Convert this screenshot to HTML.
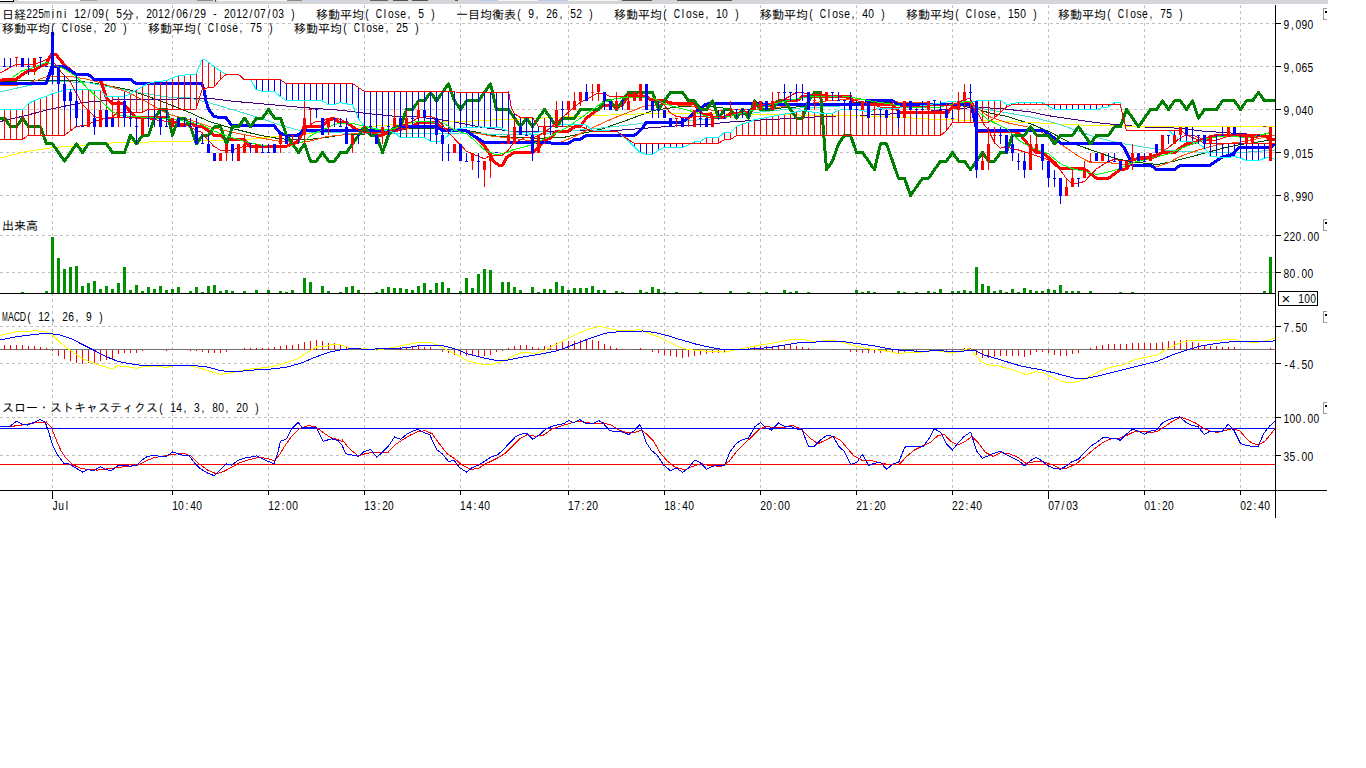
<!DOCTYPE html>
<html lang="ja"><head><meta charset="utf-8"><title>日経225mini チャート</title>
<style>
html,body{margin:0;padding:0;background:#fff;overflow:hidden}
body{width:1366px;height:768px;font-family:"Liberation Sans", "IPAGothic", sans-serif;}
svg{display:block;position:absolute;left:0;top:0}
svg text{font-family:"Liberation Sans","IPAGothic",sans-serif}
</style></head><body>
<svg width="1366" height="768" viewBox="0 0 1366 768" shape-rendering="crispEdges">
<rect x="0" y="0" width="1327.5" height="4.4" fill="#d6d6da"/>
<rect x="0" y="0" width="13" height="1.3" fill="#fff"/><rect x="0" y="1.1" width="14" height="0.9" fill="#000"/><rect x="13" y="0" width="1" height="2" fill="#000"/>
<rect x="18" y="0" width="62" height="1.2" fill="#fff"/><rect x="80" y="0" width="17" height="1.2" fill="#a8a8a8"/>
<rect x="197" y="0" width="16" height="1.2" fill="#8c8c8c"/><rect x="215" y="0" width="1" height="2" fill="#555"/>
<rect x="217" y="0" width="70" height="1.0" fill="#f4f4f4"/><rect x="287" y="0" width="15" height="1.2" fill="#8c8c8c"/>
<rect x="308" y="0" width="20" height="1.4" fill="#c5d5ee"/>
<rect x="370" y="0" width="18" height="1.2" fill="#666"/><rect x="393" y="0" width="15" height="1.2" fill="#555"/><rect x="412" y="0" width="16" height="1.2" fill="#555"/><rect x="455" y="0" width="3" height="1.2" fill="#555"/>
<rect x="478" y="0" width="140" height="1.2" fill="#f4f4f4"/><rect x="478" y="0" width="20" height="1.4" fill="#b8cdee"/><rect x="538" y="0" width="30" height="1.4" fill="#b8cdee"/>
<rect x="622" y="0" width="30" height="1.3" fill="#555"/><rect x="677" y="0" width="55" height="1.3" fill="#555"/>
<line x1="52.5" y1="5" x2="52.5" y2="490.5" stroke="#c0c0c0" stroke-dasharray="3 3"/>
<line x1="172.5" y1="5" x2="172.5" y2="490.5" stroke="#c0c0c0" stroke-dasharray="3 3"/>
<line x1="268.5" y1="5" x2="268.5" y2="490.5" stroke="#c0c0c0" stroke-dasharray="3 3"/>
<line x1="364.5" y1="5" x2="364.5" y2="490.5" stroke="#c0c0c0" stroke-dasharray="3 3"/>
<line x1="460.5" y1="5" x2="460.5" y2="490.5" stroke="#c0c0c0" stroke-dasharray="3 3"/>
<line x1="568.5" y1="5" x2="568.5" y2="490.5" stroke="#c0c0c0" stroke-dasharray="3 3"/>
<line x1="664.5" y1="5" x2="664.5" y2="490.5" stroke="#c0c0c0" stroke-dasharray="3 3"/>
<line x1="760.5" y1="5" x2="760.5" y2="490.5" stroke="#c0c0c0" stroke-dasharray="3 3"/>
<line x1="856.5" y1="5" x2="856.5" y2="490.5" stroke="#c0c0c0" stroke-dasharray="3 3"/>
<line x1="952.5" y1="5" x2="952.5" y2="490.5" stroke="#c0c0c0" stroke-dasharray="3 3"/>
<line x1="1048.5" y1="5" x2="1048.5" y2="490.5" stroke="#c0c0c0" stroke-dasharray="3 3"/>
<line x1="1144.5" y1="5" x2="1144.5" y2="490.5" stroke="#c0c0c0" stroke-dasharray="3 3"/>
<line x1="1240.5" y1="5" x2="1240.5" y2="490.5" stroke="#c0c0c0" stroke-dasharray="3 3"/>
<line x1="0" y1="23.5" x2="1275.5" y2="23.5" stroke="#c0c0c0" stroke-dasharray="3 3"/>
<line x1="0" y1="66.5" x2="1275.5" y2="66.5" stroke="#c0c0c0" stroke-dasharray="3 3"/>
<line x1="0" y1="109.5" x2="1275.5" y2="109.5" stroke="#c0c0c0" stroke-dasharray="3 3"/>
<line x1="0" y1="152.5" x2="1275.5" y2="152.5" stroke="#c0c0c0" stroke-dasharray="3 3"/>
<line x1="0" y1="195.5" x2="1275.5" y2="195.5" stroke="#c0c0c0" stroke-dasharray="3 3"/>
<line x1="0" y1="235.5" x2="1275.5" y2="235.5" stroke="#c0c0c0" stroke-dasharray="3 3"/>
<line x1="0" y1="272.5" x2="1275.5" y2="272.5" stroke="#c0c0c0" stroke-dasharray="3 3"/>
<line x1="0" y1="326.5" x2="1275.5" y2="326.5" stroke="#c0c0c0" stroke-dasharray="3 3"/>
<line x1="0" y1="363.5" x2="1275.5" y2="363.5" stroke="#c0c0c0" stroke-dasharray="3 3"/>
<line x1="0" y1="417.5" x2="1275.5" y2="417.5" stroke="#c0c0c0" stroke-dasharray="3 3"/>
<line x1="0" y1="455.5" x2="1275.5" y2="455.5" stroke="#c0c0c0" stroke-dasharray="3 3"/>
<!--SERIES-->
<polyline points="0.0,82.0 34.0,80.0 76.0,80.7 94.0,83.2 112.0,86.3 130.0,90.0 148.0,96.3 171.0,105.0 189.8,112.6 208.6,121.3 233.6,128.8 258.6,135.0 280.0,138.8 303.7,140.0 321.0,138.2 342.0,135.0 364.5,134.0 394.6,130.0 417.0,128.2 442.5,128.8 460.5,129.4 479.7,132.6 492.0,135.7 513.0,137.3 537.6,138.2 562.6,137.6 581.0,133.8 602.6,128.8 627.6,120.0 652.7,110.5 677.7,107.0 711.0,106.5 731.0,109.0 760.5,109.4 796.5,107.0 826.4,103.8 871.0,102.5 910.0,102.0 952.6,104.4 972.7,107.6 988.4,112.6 1006.5,116.3 1031.0,124.0 1048.5,131.3 1070.0,142.6 1095.0,151.3 1114.5,158.2 1132.7,162.0 1150.6,163.8 1157.7,164.5 1174.6,161.0 1204.5,153.2 1225.0,147.6 1240.5,144.5 1262.7,141.3 1275.5,138.8" fill="none" stroke="#005000" stroke-width="1" />
<polyline points="0.0,121.6 22.5,116.3 52.0,108.8 82.0,102.6 112.0,100.0 171.0,99.7 183.5,98.2 208.6,98.2 233.6,101.3 268.4,104.4 304.0,107.6 342.0,110.4 364.5,113.2 394.6,116.3 417.0,117.0 442.5,120.0 460.5,123.2 479.7,127.0 513.0,131.5 540.0,132.0 581.0,130.7 615.0,130.5 646.0,128.2 670.0,126.3 711.0,124.0 731.0,121.9 760.5,120.0 796.5,118.2 826.4,116.3 871.0,115.0 900.0,113.5 934.0,110.8 947.6,109.4 972.7,107.6 997.7,108.2 1031.0,112.0 1048.4,115.7 1096.4,122.6 1120.0,125.0 1144.6,127.0 1180.0,128.2 1204.5,131.3 1225.0,132.6 1244.0,133.8 1267.7,135.7" fill="none" stroke="#400080" stroke-width="1" />
<polyline points="0.0,158.0 24.0,152.0 52.4,147.6 112.0,143.0 172.0,141.4 208.6,140.7 246.0,139.5 271.0,137.0 296.0,134.5 321.0,132.6 342.0,131.4 364.5,127.0 394.6,124.4 417.0,122.6 442.5,122.0 467.0,121.3 492.0,120.0 513.0,119.4 550.0,117.6 587.6,116.0 625.0,114.3 671.0,113.2 711.0,113.0 760.5,114.5 812.7,115.2 871.0,116.2 890.8,117.0 911.7,118.0 935.0,119.4 985.0,120.7 1031.0,122.5 1057.6,124.0 1095.0,125.6 1140.0,126.2 1275.5,126.3" fill="none" stroke="#ffff00" stroke-width="1" />
<polyline points="0.0,92.0 25.0,86.3 52.0,81.3 88.0,82.5 130.0,91.3 171.0,97.5 189.8,98.0 208.6,102.6 233.6,110.0 258.6,117.6 280.0,125.0 298.0,130.0 308.7,132.0 342.0,133.0 400.0,134.0 460.0,133.0 513.0,135.0 540.0,134.0 568.0,131.0 594.0,128.8 644.0,123.2 670.0,122.0 711.0,119.0 760.0,112.0 800.0,108.0 860.0,105.0 900.0,104.0 952.0,103.0 972.7,107.0 997.7,111.3 1031.0,117.0 1048.4,121.3 1057.6,123.8 1095.0,137.0 1120.0,143.2 1144.6,147.2 1170.0,150.7 1210.5,152.6 1240.5,152.6 1275.5,150.0" fill="none" stroke="#40e0d0" stroke-width="1" />
<polyline points="0.0,85.7 18.8,85.0 34.0,81.3 46.0,77.0 70.0,76.3 88.0,79.4 100.0,82.5 130.0,93.2 148.0,102.6 160.0,110.0 171.0,115.0 189.8,120.0 208.6,126.3 233.6,132.6 258.6,137.6 280.0,141.4 298.0,142.6 308.7,141.4 327.5,136.4 342.0,135.0 364.5,132.6 394.6,128.8 417.0,127.6 442.5,128.2 460.5,130.0 479.7,133.8 492.0,136.3 513.0,138.2 525.0,140.0 550.0,142.0 561.3,142.0 575.0,136.3 590.0,128.8 615.0,117.6 644.0,106.3 665.0,104.4 690.0,105.7 711.0,110.0 730.0,110.0 760.0,109.0 800.0,105.0 826.0,101.0 850.0,99.0 871.0,100.0 897.5,102.0 952.6,103.8 976.5,107.5 988.4,116.3 1006.5,122.6 1031.0,127.6 1042.5,132.5 1060.4,143.8 1078.5,156.3 1090.5,162.6 1108.5,162.6 1126.4,165.0 1144.6,166.3 1156.6,167.0 1168.6,162.6 1180.6,156.3 1198.4,150.0 1216.5,145.0 1240.5,142.0 1262.7,137.6 1275.5,135.0" fill="none" stroke="#ff5000" stroke-width="1" />
<polyline points="0.0,81.3 4.0,79.4 16.0,79.4 22.0,75.0 28.0,70.7 34.1,70.7 40.1,66.4 45.9,64.4 50.1,56.3 52.0,53.8 56.3,55.0 64.0,64.4 70.0,70.0 76.0,74.2 88.0,74.2 94.0,79.4 100.2,79.4 103.9,90.1 106.4,97.6 112.0,103.8 123.9,103.8 129.9,111.3 136.0,117.6 167.8,117.6 174.8,122.6 178.0,125.7 184.0,125.7 190.0,122.6 196.0,126.3 202.0,126.3 208.1,130.7 213.9,135.1 219.9,135.1 226.0,139.5 244.0,139.5 250.0,146.4 286.0,146.4 292.1,143.9 297.9,141.4 301.2,135.1 303.9,126.3 322.0,126.3 328.0,120.1 334.0,118.8 340.0,122.6 346.5,122.6 352.5,126.7 358.5,130.7 370.5,130.7 376.6,135.2 382.4,135.2 388.4,132.6 394.5,130.7 400.5,129.4 406.5,126.7 412.5,126.7 418.5,122.6 436.5,122.6 442.5,128.8 448.5,130.7 466.6,130.7 472.6,135.2 478.6,139.5 484.6,146.3 490.6,155.1 493.5,161.4 498.5,165.1 502.6,165.1 506.3,157.6 513.8,152.5 532.5,152.5 538.6,147.6 544.6,140.1 550.5,138.2 556.5,131.0 568.5,131.0 574.5,126.7 580.1,126.7 586.4,118.1 592.0,113.8 598.0,109.4 603.9,105.1 622.0,105.1 628.0,96.3 646.4,96.3 652.0,100.7 663.9,100.7 669.9,102.8 676.0,103.6 694.0,103.8 697.7,107.6 701.5,113.8 707.5,114.5 711.0,113.8 712.5,117.6 725.0,117.6 730.5,113.2 750.1,113.2 754.5,105.7 772.6,105.7 778.5,100.8 796.5,100.8 802.5,96.6 850.4,96.0 850.5,96.6 854.0,104.5 892.5,104.6 900.0,113.0 947.6,112.5 952.0,107.5 958.5,107.0 964.5,102.0 970.0,102.0 973.0,106.0 976.5,116.0 977.0,131.0 1014.0,131.0 1020.0,134.5 1024.5,140.0 1030.5,147.6 1036.5,152.6 1042.5,152.6 1048.5,157.6 1054.6,162.6 1060.4,168.8 1084.5,168.8 1090.5,173.8 1096.5,178.2 1108.5,178.2 1114.5,173.8 1120.5,169.5 1126.5,168.8 1132.5,160.1 1138.6,158.2 1150.6,156.9 1156.6,155.1 1162.6,152.6 1174.6,152.6 1180.6,147.6 1186.6,143.8 1192.6,143.2 1198.4,141.3 1204.5,138.8 1210.5,137.6 1216.5,135.2 1264.5,135.2 1270.6,140.1 1275.5,139.5" fill="none" stroke="#ff0000" stroke-width="3" stroke-linejoin="round"/>
<polyline points="0.0,83.6 46.3,83.6 52.0,66.4 63.8,66.4 76.0,74.2 88.0,74.2 94.0,79.4 130.2,79.4 136.0,83.6 171.0,83.6 201.7,83.7 203.8,88.8 206.1,101.3 208.6,109.4 213.9,116.3 219.9,117.8 226.0,117.8 232.0,125.7 274.0,125.7 280.0,133.2 286.0,135.1 297.9,135.1 303.9,130.1 342.0,130.1 388.3,130.7 394.6,129.4 400.5,126.7 436.5,126.7 442.5,130.7 466.6,130.7 472.6,135.2 484.6,142.6 513.0,142.6 568.2,143.2 574.5,139.5 580.1,139.5 586.4,135.2 634.6,135.2 640.8,130.1 646.5,122.3 682.0,122.3 688.0,118.2 694.0,113.2 701.5,107.6 706.0,104.2 707.8,103.8 865.0,104.4 867.0,100.3 892.0,100.3 898.0,104.8 970.0,105.0 972.7,111.3 976.5,128.8 977.0,130.5 1042.6,130.1 1048.4,133.8 1054.5,138.2 1060.5,143.2 1120.2,143.2 1123.9,147.6 1128.9,157.6 1132.5,165.1 1150.6,165.1 1156.6,169.5 1174.6,169.5 1180.6,165.1 1210.5,165.1 1216.5,160.7 1222.5,157.0 1232.6,154.5 1238.9,147.6 1270.6,147.6 1275.5,143.8" fill="none" stroke="#0000ff" stroke-width="3" stroke-linejoin="round"/>
<polyline points="0.0,118.1 4.5,118.1 10.5,126.7 16.5,126.7 22.5,118.1 28.5,126.7 34.5,126.7 40.5,126.7 46.5,143.9 52.5,143.9 58.5,152.5 64.5,161.1 70.5,152.5 76.5,143.9 82.5,152.5 88.5,143.9 94.5,143.9 100.5,143.9 106.5,143.9 112.5,152.5 118.5,152.5 124.5,152.5 130.5,135.3 136.5,143.9 142.5,135.3 148.5,135.3 154.5,118.1 160.5,109.5 166.5,109.5 172.5,135.3 178.5,118.1 184.5,118.1 190.5,126.7 196.5,143.9 202.5,135.3 208.5,135.3 214.5,126.7 220.5,126.7 226.5,143.9 232.5,126.7 238.5,126.7 244.5,118.1 250.5,126.7 256.5,118.1 262.5,118.1 268.5,109.5 274.5,118.1 280.5,118.1 286.5,135.3 292.5,143.9 298.5,152.5 304.5,143.9 310.5,161.1 316.5,161.1 322.5,152.5 328.5,161.1 334.5,161.1 340.5,152.5 346.5,152.5 352.5,143.9 358.5,135.3 364.5,126.7 370.5,135.3 376.5,135.3 382.5,152.5 388.5,135.3 394.5,126.7 400.5,126.7 406.5,109.5 412.5,109.5 418.5,100.9 424.5,100.9 430.5,92.3 436.5,100.9 442.5,92.3 448.5,83.7 454.5,100.9 460.5,109.5 466.5,100.9 472.5,100.9 478.5,100.9 484.5,92.3 490.5,83.7 496.5,109.5 502.5,109.5 508.5,109.5 514.5,118.1 520.5,126.7 526.5,118.1 532.5,126.7 538.5,118.1 544.5,109.5 550.5,118.1 556.5,126.7 562.5,118.1 568.5,118.1 574.5,118.1 580.5,109.5 586.5,109.5 592.5,109.5 598.5,109.5 604.5,100.9 610.5,100.9 616.5,109.5 622.5,100.9 628.5,92.3 634.5,92.3 640.5,92.3 646.5,92.3 652.5,92.3 658.5,109.5 664.5,100.9 670.5,92.3 676.5,92.3 682.5,92.3 688.5,100.9 694.5,100.9 700.5,109.5 706.5,109.5 712.5,100.9 718.5,118.1 724.5,109.5 730.5,109.5 736.5,118.1 742.5,109.5 748.5,118.1 754.5,100.9 760.5,109.5 766.5,109.5 772.5,109.5 778.5,100.9 784.5,100.9 790.5,109.5 796.5,118.1 802.5,118.1 808.5,100.9 814.5,92.3 820.5,92.3 826.5,169.7 832.5,161.1 838.5,143.9 844.5,135.3 850.5,135.3 856.5,152.5 862.5,152.5 868.5,161.1 874.5,169.7 880.5,143.9 886.5,143.9 892.5,161.1 898.5,178.3 904.5,178.3 910.5,195.5 916.5,186.9 922.5,178.3 928.5,178.3 934.5,169.7 940.5,161.1 946.5,161.1 952.5,152.5 958.5,161.1 964.5,161.1 970.5,169.7 976.5,161.1 982.5,152.5 988.5,161.1 994.5,161.1 1000.5,152.5 1006.5,152.5 1012.5,135.3 1018.5,135.3 1024.5,135.3 1030.5,126.7 1036.5,135.3 1042.5,135.3 1048.5,135.3 1054.5,143.9 1060.5,135.3 1066.5,135.3 1072.5,135.3 1078.5,126.7 1084.5,135.3 1090.5,143.9 1096.5,135.3 1102.5,135.3 1108.5,135.3 1114.5,126.7 1120.5,126.7 1126.5,109.5 1132.5,118.1 1138.5,126.7 1144.5,118.1 1150.5,109.5 1156.5,109.5 1162.5,100.9 1168.5,109.5 1174.5,100.9 1180.5,100.9 1186.5,109.5 1192.5,100.9 1198.5,118.1 1204.5,109.5 1210.5,109.5 1216.5,109.5 1222.5,100.9 1228.5,100.9 1234.5,100.9 1240.5,109.5 1246.5,100.9 1252.5,100.9 1258.5,92.3 1264.5,100.9 1270.5,100.9 1275.0,100.9" fill="none" stroke="#008000" stroke-width="3" stroke-linejoin="round"/>
<line x1="4.5" y1="109.5" x2="4.5" y2="139.5" stroke="#ff0000" stroke-width="1"/>
<line x1="10.5" y1="109.5" x2="10.5" y2="139.5" stroke="#ff0000" stroke-width="1"/>
<line x1="16.5" y1="109.5" x2="16.5" y2="139.5" stroke="#ff0000" stroke-width="1"/>
<line x1="22.5" y1="109.5" x2="22.5" y2="139.5" stroke="#ff0000" stroke-width="1"/>
<line x1="28.5" y1="103.6" x2="28.5" y2="135.5" stroke="#ff0000" stroke-width="1"/>
<line x1="34.5" y1="100.5" x2="34.5" y2="135.5" stroke="#ff0000" stroke-width="1"/>
<line x1="40.5" y1="98.1" x2="40.5" y2="135.5" stroke="#ff0000" stroke-width="1"/>
<line x1="46.5" y1="96.3" x2="46.5" y2="135.5" stroke="#ff0000" stroke-width="1"/>
<line x1="52.5" y1="93.7" x2="52.5" y2="135.5" stroke="#ff0000" stroke-width="1"/>
<line x1="58.5" y1="92.1" x2="58.5" y2="135.5" stroke="#ff0000" stroke-width="1"/>
<line x1="64.5" y1="90.0" x2="64.5" y2="135.1" stroke="#ff0000" stroke-width="1"/>
<line x1="70.5" y1="89.8" x2="70.5" y2="130.7" stroke="#ff0000" stroke-width="1"/>
<line x1="76.5" y1="89.9" x2="76.5" y2="126.5" stroke="#ff0000" stroke-width="1"/>
<line x1="82.5" y1="89.9" x2="82.5" y2="125.7" stroke="#ff0000" stroke-width="1"/>
<line x1="88.5" y1="90.0" x2="88.5" y2="124.2" stroke="#ff0000" stroke-width="1"/>
<line x1="94.5" y1="90.0" x2="94.5" y2="121.2" stroke="#ff0000" stroke-width="1"/>
<line x1="100.5" y1="90.4" x2="100.5" y2="119.7" stroke="#ff0000" stroke-width="1"/>
<line x1="106.5" y1="96.3" x2="106.5" y2="118.3" stroke="#ff0000" stroke-width="1"/>
<line x1="112.5" y1="96.3" x2="112.5" y2="116.9" stroke="#ff0000" stroke-width="1"/>
<line x1="118.5" y1="96.3" x2="118.5" y2="112.5" stroke="#ff0000" stroke-width="1"/>
<line x1="124.5" y1="96.2" x2="124.5" y2="112.5" stroke="#ff0000" stroke-width="1"/>
<line x1="130.5" y1="94.0" x2="130.5" y2="112.5" stroke="#ff0000" stroke-width="1"/>
<line x1="136.5" y1="89.8" x2="136.5" y2="112.5" stroke="#ff0000" stroke-width="1"/>
<line x1="142.5" y1="86.6" x2="142.5" y2="112.1" stroke="#ff0000" stroke-width="1"/>
<line x1="148.5" y1="83.4" x2="148.5" y2="109.5" stroke="#ff0000" stroke-width="1"/>
<line x1="154.5" y1="81.9" x2="154.5" y2="109.5" stroke="#ff0000" stroke-width="1"/>
<line x1="160.5" y1="81.2" x2="160.5" y2="109.5" stroke="#ff0000" stroke-width="1"/>
<line x1="166.5" y1="80.5" x2="166.5" y2="109.5" stroke="#ff0000" stroke-width="1"/>
<line x1="172.5" y1="78.2" x2="172.5" y2="109.5" stroke="#ff0000" stroke-width="1"/>
<line x1="178.5" y1="76.0" x2="178.5" y2="109.5" stroke="#ff0000" stroke-width="1"/>
<line x1="184.5" y1="75.1" x2="184.5" y2="109.5" stroke="#ff0000" stroke-width="1"/>
<line x1="190.5" y1="74.4" x2="190.5" y2="109.5" stroke="#ff0000" stroke-width="1"/>
<line x1="196.5" y1="72.9" x2="196.5" y2="107.9" stroke="#ff0000" stroke-width="1"/>
<line x1="202.5" y1="59.7" x2="202.5" y2="89.9" stroke="#ff0000" stroke-width="1"/>
<line x1="208.5" y1="62.2" x2="208.5" y2="87.5" stroke="#ff0000" stroke-width="1"/>
<line x1="214.5" y1="66.7" x2="214.5" y2="86.6" stroke="#ff0000" stroke-width="1"/>
<line x1="220.5" y1="71.0" x2="220.5" y2="79.5" stroke="#ff0000" stroke-width="1"/>
<line x1="256.5" y1="89.6" x2="256.5" y2="79.4" stroke="#0000ff" stroke-width="1"/>
<line x1="262.5" y1="91.3" x2="262.5" y2="79.4" stroke="#0000ff" stroke-width="1"/>
<line x1="268.5" y1="91.3" x2="268.5" y2="79.4" stroke="#0000ff" stroke-width="1"/>
<line x1="274.5" y1="91.7" x2="274.5" y2="79.4" stroke="#0000ff" stroke-width="1"/>
<line x1="280.5" y1="96.6" x2="280.5" y2="79.8" stroke="#0000ff" stroke-width="1"/>
<line x1="286.5" y1="100.7" x2="286.5" y2="83.5" stroke="#0000ff" stroke-width="1"/>
<line x1="292.5" y1="100.7" x2="292.5" y2="83.5" stroke="#0000ff" stroke-width="1"/>
<line x1="298.5" y1="100.7" x2="298.5" y2="83.5" stroke="#0000ff" stroke-width="1"/>
<line x1="304.5" y1="100.7" x2="304.5" y2="83.5" stroke="#0000ff" stroke-width="1"/>
<line x1="310.5" y1="100.7" x2="310.5" y2="83.5" stroke="#0000ff" stroke-width="1"/>
<line x1="316.5" y1="100.7" x2="316.5" y2="83.5" stroke="#0000ff" stroke-width="1"/>
<line x1="322.5" y1="101.0" x2="322.5" y2="83.5" stroke="#0000ff" stroke-width="1"/>
<line x1="328.5" y1="104.5" x2="328.5" y2="83.5" stroke="#0000ff" stroke-width="1"/>
<line x1="334.5" y1="104.6" x2="334.5" y2="83.5" stroke="#0000ff" stroke-width="1"/>
<line x1="340.5" y1="102.7" x2="340.5" y2="83.5" stroke="#0000ff" stroke-width="1"/>
<line x1="346.5" y1="103.8" x2="346.5" y2="83.5" stroke="#0000ff" stroke-width="1"/>
<line x1="352.5" y1="105.0" x2="352.5" y2="83.5" stroke="#0000ff" stroke-width="1"/>
<line x1="358.5" y1="118.8" x2="358.5" y2="87.5" stroke="#0000ff" stroke-width="1"/>
<line x1="364.5" y1="126.3" x2="364.5" y2="91.5" stroke="#0000ff" stroke-width="1"/>
<line x1="370.5" y1="127.6" x2="370.5" y2="91.5" stroke="#0000ff" stroke-width="1"/>
<line x1="376.5" y1="128.8" x2="376.5" y2="91.6" stroke="#0000ff" stroke-width="1"/>
<line x1="382.5" y1="130.1" x2="382.5" y2="91.6" stroke="#0000ff" stroke-width="1"/>
<line x1="388.5" y1="131.3" x2="388.5" y2="91.6" stroke="#0000ff" stroke-width="1"/>
<line x1="394.5" y1="132.6" x2="394.5" y2="91.7" stroke="#0000ff" stroke-width="1"/>
<line x1="400.5" y1="137.6" x2="400.5" y2="91.7" stroke="#0000ff" stroke-width="1"/>
<line x1="406.5" y1="137.6" x2="406.5" y2="91.7" stroke="#0000ff" stroke-width="1"/>
<line x1="412.5" y1="137.6" x2="412.5" y2="91.8" stroke="#0000ff" stroke-width="1"/>
<line x1="418.5" y1="137.6" x2="418.5" y2="91.8" stroke="#0000ff" stroke-width="1"/>
<line x1="424.5" y1="137.6" x2="424.5" y2="91.8" stroke="#0000ff" stroke-width="1"/>
<line x1="430.5" y1="141.3" x2="430.5" y2="91.9" stroke="#0000ff" stroke-width="1"/>
<line x1="436.5" y1="142.0" x2="436.5" y2="91.9" stroke="#0000ff" stroke-width="1"/>
<line x1="442.5" y1="140.1" x2="442.5" y2="91.9" stroke="#0000ff" stroke-width="1"/>
<line x1="448.5" y1="135.1" x2="448.5" y2="92.0" stroke="#0000ff" stroke-width="1"/>
<line x1="454.5" y1="129.6" x2="454.5" y2="92.0" stroke="#0000ff" stroke-width="1"/>
<line x1="460.5" y1="128.2" x2="460.5" y2="92.0" stroke="#0000ff" stroke-width="1"/>
<line x1="466.5" y1="127.8" x2="466.5" y2="92.1" stroke="#0000ff" stroke-width="1"/>
<line x1="472.5" y1="127.4" x2="472.5" y2="92.1" stroke="#0000ff" stroke-width="1"/>
<line x1="478.5" y1="127.0" x2="478.5" y2="92.1" stroke="#0000ff" stroke-width="1"/>
<line x1="484.5" y1="127.1" x2="484.5" y2="92.2" stroke="#0000ff" stroke-width="1"/>
<line x1="490.5" y1="127.3" x2="490.5" y2="92.2" stroke="#0000ff" stroke-width="1"/>
<line x1="496.5" y1="127.6" x2="496.5" y2="92.2" stroke="#0000ff" stroke-width="1"/>
<line x1="502.5" y1="128.7" x2="502.5" y2="92.3" stroke="#0000ff" stroke-width="1"/>
<line x1="508.5" y1="131.3" x2="508.5" y2="92.3" stroke="#0000ff" stroke-width="1"/>
<line x1="514.5" y1="132.0" x2="514.5" y2="113.8" stroke="#0000ff" stroke-width="1"/>
<line x1="520.5" y1="132.6" x2="520.5" y2="117.6" stroke="#0000ff" stroke-width="1"/>
<line x1="526.5" y1="132.9" x2="526.5" y2="117.6" stroke="#0000ff" stroke-width="1"/>
<line x1="532.5" y1="133.2" x2="532.5" y2="117.6" stroke="#0000ff" stroke-width="1"/>
<line x1="538.5" y1="132.0" x2="538.5" y2="126.6" stroke="#0000ff" stroke-width="1"/>
<line x1="544.5" y1="131.3" x2="544.5" y2="126.7" stroke="#0000ff" stroke-width="1"/>
<line x1="556.5" y1="125.1" x2="556.5" y2="126.7" stroke="#ff0000" stroke-width="1"/>
<line x1="562.5" y1="124.9" x2="562.5" y2="126.7" stroke="#ff0000" stroke-width="1"/>
<line x1="568.5" y1="124.8" x2="568.5" y2="126.7" stroke="#ff0000" stroke-width="1"/>
<line x1="574.5" y1="124.6" x2="574.5" y2="126.7" stroke="#ff0000" stroke-width="1"/>
<line x1="580.5" y1="124.5" x2="580.5" y2="126.7" stroke="#ff0000" stroke-width="1"/>
<line x1="586.5" y1="125.2" x2="586.5" y2="128.9" stroke="#ff0000" stroke-width="1"/>
<line x1="634.5" y1="146.9" x2="634.5" y2="143.2" stroke="#0000ff" stroke-width="1"/>
<line x1="640.5" y1="152.7" x2="640.5" y2="143.2" stroke="#0000ff" stroke-width="1"/>
<line x1="646.5" y1="154.5" x2="646.5" y2="143.2" stroke="#0000ff" stroke-width="1"/>
<line x1="652.5" y1="154.5" x2="652.5" y2="143.2" stroke="#0000ff" stroke-width="1"/>
<line x1="658.5" y1="150.1" x2="658.5" y2="143.2" stroke="#0000ff" stroke-width="1"/>
<line x1="664.5" y1="147.6" x2="664.5" y2="143.2" stroke="#0000ff" stroke-width="1"/>
<line x1="670.5" y1="147.6" x2="670.5" y2="143.2" stroke="#0000ff" stroke-width="1"/>
<line x1="676.5" y1="147.6" x2="676.5" y2="143.2" stroke="#0000ff" stroke-width="1"/>
<line x1="682.5" y1="147.4" x2="682.5" y2="143.2" stroke="#0000ff" stroke-width="1"/>
<line x1="688.5" y1="144.8" x2="688.5" y2="143.2" stroke="#0000ff" stroke-width="1"/>
<line x1="694.5" y1="141.9" x2="694.5" y2="143.2" stroke="#ff0000" stroke-width="1"/>
<line x1="700.5" y1="141.2" x2="700.5" y2="143.2" stroke="#ff0000" stroke-width="1"/>
<line x1="706.5" y1="137.6" x2="706.5" y2="143.2" stroke="#ff0000" stroke-width="1"/>
<line x1="712.5" y1="137.6" x2="712.5" y2="143.2" stroke="#ff0000" stroke-width="1"/>
<line x1="718.5" y1="137.6" x2="718.5" y2="143.2" stroke="#ff0000" stroke-width="1"/>
<line x1="724.5" y1="132.4" x2="724.5" y2="139.5" stroke="#ff0000" stroke-width="1"/>
<line x1="730.5" y1="132.4" x2="730.5" y2="139.5" stroke="#ff0000" stroke-width="1"/>
<line x1="736.5" y1="126.4" x2="736.5" y2="135.5" stroke="#ff0000" stroke-width="1"/>
<line x1="742.5" y1="123.9" x2="742.5" y2="135.5" stroke="#ff0000" stroke-width="1"/>
<line x1="748.5" y1="122.6" x2="748.5" y2="135.5" stroke="#ff0000" stroke-width="1"/>
<line x1="754.5" y1="119.5" x2="754.5" y2="135.5" stroke="#ff0000" stroke-width="1"/>
<line x1="760.5" y1="118.5" x2="760.5" y2="135.5" stroke="#ff0000" stroke-width="1"/>
<line x1="766.5" y1="117.6" x2="766.5" y2="135.5" stroke="#ff0000" stroke-width="1"/>
<line x1="772.5" y1="116.3" x2="772.5" y2="135.5" stroke="#ff0000" stroke-width="1"/>
<line x1="778.5" y1="115.1" x2="778.5" y2="135.4" stroke="#ff0000" stroke-width="1"/>
<line x1="784.5" y1="114.1" x2="784.5" y2="135.4" stroke="#ff0000" stroke-width="1"/>
<line x1="790.5" y1="113.2" x2="790.5" y2="135.4" stroke="#ff0000" stroke-width="1"/>
<line x1="796.5" y1="112.0" x2="796.5" y2="135.4" stroke="#ff0000" stroke-width="1"/>
<line x1="802.5" y1="110.7" x2="802.5" y2="135.4" stroke="#ff0000" stroke-width="1"/>
<line x1="808.5" y1="111.3" x2="808.5" y2="135.4" stroke="#ff0000" stroke-width="1"/>
<line x1="814.5" y1="112.6" x2="814.5" y2="135.4" stroke="#ff0000" stroke-width="1"/>
<line x1="820.5" y1="113.2" x2="820.5" y2="135.4" stroke="#ff0000" stroke-width="1"/>
<line x1="826.5" y1="113.2" x2="826.5" y2="135.4" stroke="#ff0000" stroke-width="1"/>
<line x1="832.5" y1="113.2" x2="832.5" y2="135.4" stroke="#ff0000" stroke-width="1"/>
<line x1="838.5" y1="110.5" x2="838.5" y2="135.4" stroke="#ff0000" stroke-width="1"/>
<line x1="844.5" y1="109.5" x2="844.5" y2="135.4" stroke="#ff0000" stroke-width="1"/>
<line x1="850.5" y1="109.5" x2="850.5" y2="135.4" stroke="#ff0000" stroke-width="1"/>
<line x1="856.5" y1="109.5" x2="856.5" y2="135.4" stroke="#ff0000" stroke-width="1"/>
<line x1="862.5" y1="110.6" x2="862.5" y2="135.4" stroke="#ff0000" stroke-width="1"/>
<line x1="868.5" y1="111.7" x2="868.5" y2="135.4" stroke="#ff0000" stroke-width="1"/>
<line x1="874.5" y1="109.9" x2="874.5" y2="135.3" stroke="#ff0000" stroke-width="1"/>
<line x1="880.5" y1="108.2" x2="880.5" y2="135.3" stroke="#ff0000" stroke-width="1"/>
<line x1="886.5" y1="108.6" x2="886.5" y2="135.3" stroke="#ff0000" stroke-width="1"/>
<line x1="892.5" y1="108.9" x2="892.5" y2="135.3" stroke="#ff0000" stroke-width="1"/>
<line x1="898.5" y1="108.2" x2="898.5" y2="135.3" stroke="#ff0000" stroke-width="1"/>
<line x1="904.5" y1="107.5" x2="904.5" y2="135.3" stroke="#ff0000" stroke-width="1"/>
<line x1="910.5" y1="107.0" x2="910.5" y2="135.3" stroke="#ff0000" stroke-width="1"/>
<line x1="916.5" y1="106.3" x2="916.5" y2="135.3" stroke="#ff0000" stroke-width="1"/>
<line x1="922.5" y1="105.6" x2="922.5" y2="135.3" stroke="#ff0000" stroke-width="1"/>
<line x1="928.5" y1="104.7" x2="928.5" y2="135.3" stroke="#ff0000" stroke-width="1"/>
<line x1="934.5" y1="103.8" x2="934.5" y2="135.3" stroke="#ff0000" stroke-width="1"/>
<line x1="940.5" y1="102.9" x2="940.5" y2="135.3" stroke="#ff0000" stroke-width="1"/>
<line x1="946.5" y1="102.1" x2="946.5" y2="130.6" stroke="#ff0000" stroke-width="1"/>
<line x1="952.5" y1="101.3" x2="952.5" y2="122.5" stroke="#ff0000" stroke-width="1"/>
<line x1="958.5" y1="101.2" x2="958.5" y2="122.5" stroke="#ff0000" stroke-width="1"/>
<line x1="964.5" y1="101.2" x2="964.5" y2="122.5" stroke="#ff0000" stroke-width="1"/>
<line x1="970.5" y1="101.1" x2="970.5" y2="122.6" stroke="#ff0000" stroke-width="1"/>
<line x1="976.5" y1="101.0" x2="976.5" y2="122.6" stroke="#ff0000" stroke-width="1"/>
<line x1="982.5" y1="100.9" x2="982.5" y2="122.6" stroke="#ff0000" stroke-width="1"/>
<line x1="988.5" y1="100.9" x2="988.5" y2="122.5" stroke="#ff0000" stroke-width="1"/>
<line x1="994.5" y1="100.8" x2="994.5" y2="117.6" stroke="#ff0000" stroke-width="1"/>
<line x1="1000.5" y1="100.7" x2="1000.5" y2="112.5" stroke="#ff0000" stroke-width="1"/>
<line x1="1006.5" y1="104.4" x2="1006.5" y2="107.0" stroke="#ff0000" stroke-width="1"/>
<line x1="1018.5" y1="102.3" x2="1018.5" y2="104.2" stroke="#ff0000" stroke-width="1"/>
<line x1="1024.5" y1="102.3" x2="1024.5" y2="104.2" stroke="#ff0000" stroke-width="1"/>
<line x1="1030.5" y1="102.3" x2="1030.5" y2="104.2" stroke="#ff0000" stroke-width="1"/>
<line x1="1036.5" y1="102.3" x2="1036.5" y2="104.2" stroke="#ff0000" stroke-width="1"/>
<line x1="1042.5" y1="102.3" x2="1042.5" y2="104.2" stroke="#ff0000" stroke-width="1"/>
<line x1="1048.5" y1="106.3" x2="1048.5" y2="104.2" stroke="#0000ff" stroke-width="1"/>
<line x1="1054.5" y1="109.4" x2="1054.5" y2="104.1" stroke="#0000ff" stroke-width="1"/>
<line x1="1060.5" y1="109.4" x2="1060.5" y2="104.1" stroke="#0000ff" stroke-width="1"/>
<line x1="1066.5" y1="109.4" x2="1066.5" y2="104.1" stroke="#0000ff" stroke-width="1"/>
<line x1="1072.5" y1="109.4" x2="1072.5" y2="104.1" stroke="#0000ff" stroke-width="1"/>
<line x1="1078.5" y1="109.4" x2="1078.5" y2="104.1" stroke="#0000ff" stroke-width="1"/>
<line x1="1084.5" y1="109.4" x2="1084.5" y2="104.1" stroke="#0000ff" stroke-width="1"/>
<line x1="1090.5" y1="109.4" x2="1090.5" y2="104.1" stroke="#0000ff" stroke-width="1"/>
<line x1="1096.5" y1="109.4" x2="1096.5" y2="104.1" stroke="#0000ff" stroke-width="1"/>
<line x1="1102.5" y1="107.6" x2="1102.5" y2="104.1" stroke="#0000ff" stroke-width="1"/>
<line x1="1108.5" y1="106.9" x2="1108.5" y2="104.1" stroke="#0000ff" stroke-width="1"/>
<line x1="1114.5" y1="102.3" x2="1114.5" y2="104.1" stroke="#ff0000" stroke-width="1"/>
<line x1="1120.5" y1="104.0" x2="1120.5" y2="105.5" stroke="#ff0000" stroke-width="1"/>
<line x1="1174.5" y1="135.8" x2="1174.5" y2="130.1" stroke="#0000ff" stroke-width="1"/>
<line x1="1180.5" y1="141.3" x2="1180.5" y2="130.1" stroke="#0000ff" stroke-width="1"/>
<line x1="1186.5" y1="141.6" x2="1186.5" y2="135.0" stroke="#0000ff" stroke-width="1"/>
<line x1="1192.5" y1="142.0" x2="1192.5" y2="137.6" stroke="#0000ff" stroke-width="1"/>
<line x1="1198.5" y1="143.9" x2="1198.5" y2="140.1" stroke="#0000ff" stroke-width="1"/>
<line x1="1204.5" y1="147.7" x2="1204.5" y2="143.2" stroke="#0000ff" stroke-width="1"/>
<line x1="1210.5" y1="156.4" x2="1210.5" y2="143.2" stroke="#0000ff" stroke-width="1"/>
<line x1="1216.5" y1="157.0" x2="1216.5" y2="143.2" stroke="#0000ff" stroke-width="1"/>
<line x1="1222.5" y1="157.6" x2="1222.5" y2="143.2" stroke="#0000ff" stroke-width="1"/>
<line x1="1228.5" y1="157.6" x2="1228.5" y2="143.2" stroke="#0000ff" stroke-width="1"/>
<line x1="1234.5" y1="156.4" x2="1234.5" y2="143.2" stroke="#0000ff" stroke-width="1"/>
<line x1="1240.5" y1="158.2" x2="1240.5" y2="143.2" stroke="#0000ff" stroke-width="1"/>
<line x1="1246.5" y1="160.7" x2="1246.5" y2="143.2" stroke="#0000ff" stroke-width="1"/>
<line x1="1252.5" y1="160.7" x2="1252.5" y2="143.2" stroke="#0000ff" stroke-width="1"/>
<line x1="1258.5" y1="160.7" x2="1258.5" y2="143.2" stroke="#0000ff" stroke-width="1"/>
<line x1="1264.5" y1="158.3" x2="1264.5" y2="143.2" stroke="#0000ff" stroke-width="1"/>
<line x1="1270.5" y1="157.0" x2="1270.5" y2="143.2" stroke="#0000ff" stroke-width="1"/>
<polyline points="0.0,109.5 22.5,109.5 28.0,103.8 34.1,100.7 40.1,98.2 45.9,96.6 52.0,93.8 58.0,92.3 64.0,90.1 70.0,89.8 100.2,90.1 106.0,96.3 124.1,96.3 129.9,94.4 136.0,90.1 142.0,86.9 148.0,83.6 154.0,81.9 166.0,80.7 178.0,76.0 190.0,74.4 196.0,74.0 202.0,60.0 203.8,59.0 208.1,61.9 213.9,66.3 219.9,70.6 226.0,74.3 238.6,74.4 244.0,79.4 251.1,80.0 256.0,89.4 262.0,91.3 274.0,91.3 280.0,96.3 286.0,100.7 322.0,100.7 328.0,104.4 334.0,104.8 340.0,102.6 346.5,103.8 352.5,105.0 355.8,112.5 358.5,118.8 364.5,126.3 379.6,129.4 394.6,132.6 400.5,137.6 424.6,137.6 430.5,141.3 436.5,142.0 442.5,140.1 448.5,135.1 452.2,130.1 460.6,128.2 479.7,126.9 496.6,127.6 500.0,127.6 508.5,131.3 520.5,132.6 532.5,133.2 538.6,132.0 544.6,131.3 550.5,127.6 556.5,125.1 581.4,124.5 586.4,125.1 591.4,130.1 616.4,131.3 627.7,140.1 640.2,152.6 646.5,154.5 652.7,154.5 658.4,150.1 664.0,147.6 682.0,147.6 688.0,145.1 694.0,142.0 700.2,141.4 706.5,137.6 718.5,137.6 724.5,132.4 730.5,132.4 736.6,126.3 742.6,123.8 748.4,122.6 754.5,119.5 766.5,117.6 778.5,115.1 790.5,113.2 802.5,110.7 808.5,111.3 814.5,112.6 820.6,113.2 832.4,113.2 840.8,109.5 856.5,109.5 863.4,110.8 870.0,112.0 878.4,108.0 892.0,109.0 900.0,108.0 920.0,106.0 940.0,103.0 952.5,101.3 1001.5,100.7 1006.3,104.4 1012.5,103.8 1018.5,102.3 1042.6,102.3 1048.4,106.3 1054.5,109.4 1096.4,109.4 1102.7,107.6 1108.5,106.9 1114.5,102.3 1120.2,102.3 1122.1,112.6 1125.2,125.1 1126.4,130.7 1168.8,130.3 1175.0,136.3 1180.5,141.3 1192.6,142.0 1198.4,143.8 1204.5,147.6 1210.5,156.4 1216.5,157.0 1222.5,157.6 1228.5,157.6 1234.5,156.4 1240.5,158.2 1246.5,160.7 1252.5,160.7 1258.5,160.7 1264.5,158.2 1270.6,157.0 1275.5,160.1" fill="none" stroke="#00ffff" stroke-width="1" />
<polyline points="0.0,139.5 22.5,139.5 28.0,135.5 64.0,135.5 76.0,126.6 87.0,125.0 95.0,121.0 113.0,116.7 116.7,112.5 141.7,112.5 148.0,109.5 171.0,109.5 196.0,109.4 198.5,101.3 202.0,90.0 208.1,87.5 213.9,87.3 219.9,80.0 226.0,74.4 238.6,74.4 244.0,79.4 279.9,79.4 286.0,83.5 342.0,83.5 352.5,83.5 364.5,91.5 508.5,92.3 508.6,91.5 511.3,107.6 514.5,113.8 520.5,117.6 532.5,117.6 538.6,126.7 581.4,126.7 586.4,128.8 592.6,131.0 616.4,131.0 625.2,137.6 634.0,143.2 718.5,143.2 724.5,139.5 730.5,139.5 736.6,135.5 940.8,135.3 946.5,130.6 952.5,122.5 988.4,122.6 994.5,117.6 1000.5,112.5 1006.5,107.0 1012.5,104.2 1120.2,104.1 1122.1,112.6 1125.2,125.1 1126.4,130.7 1180.5,130.1 1186.6,135.1 1192.6,137.6 1198.4,140.1 1204.5,143.2 1275.5,143.2" fill="none" stroke="#ff0000" stroke-width="1" />
<polyline points="12.5,77.5 22.0,70.7 34.0,67.5 46.0,62.5 52.0,64.4 64.0,68.8 76.0,76.3 88.0,88.8 100.0,100.0 112.0,111.3 118.0,115.0 130.0,116.3 171.0,119.0 200.0,124.0 214.0,131.0 230.0,137.0 250.0,143.0 270.0,146.5 290.0,146.0 304.0,141.4 310.0,136.4 316.0,132.6 328.0,127.6 334.0,124.5 342.0,123.2 354.5,123.8 364.5,126.3 379.6,130.0 394.6,128.8 406.5,123.8 418.5,121.3 442.5,122.6 454.5,130.0 466.6,133.8 472.6,138.8 484.6,150.0 496.6,155.0 508.6,152.0 512.5,150.0 531.3,145.0 550.0,136.4 568.9,126.3 590.0,111.3 602.6,102.5 615.0,98.8 627.6,97.0 652.7,98.2 665.0,103.8 677.7,107.6 696.5,112.6 711.0,118.0 730.0,116.0 754.0,110.0 770.0,105.0 790.0,100.0 810.0,97.0 830.0,96.0 850.0,97.0 871.0,101.0 890.0,104.0 910.0,108.0 940.0,107.0 958.0,103.0 970.0,101.0 976.5,110.0 988.4,120.0 1006.5,128.8 1018.5,140.0 1032.5,148.2 1048.5,153.8 1060.4,163.8 1072.5,168.8 1084.5,171.3 1096.5,174.5 1108.5,172.0 1120.5,168.2 1132.5,162.6 1144.6,160.0 1156.6,157.0 1168.6,153.8 1180.5,148.8 1192.6,143.8 1210.5,137.6 1225.0,136.3 1250.0,137.6 1270.6,132.5" fill="none" stroke="#00ff00" stroke-width="1" />
<polyline points="0.0,73.0 16.0,64.4 34.0,64.4 40.0,62.5 50.0,57.5 60.0,70.7 70.0,81.3 76.0,92.6 82.0,103.8 88.0,110.0 94.0,116.3 100.0,118.2 112.0,118.0 124.0,117.0 136.0,118.0 150.0,119.0 171.0,122.0 184.0,124.0 196.0,130.0 202.0,132.6 208.0,140.0 214.0,146.4 220.0,150.0 232.0,150.0 244.0,146.4 260.0,146.0 286.0,146.5 298.0,143.0 304.0,130.0 310.0,125.0 316.0,121.3 322.0,121.3 328.0,118.2 334.0,117.6 342.0,120.0 352.5,127.6 364.5,132.6 380.0,133.0 394.6,130.0 400.5,126.3 412.5,121.3 418.5,117.6 430.5,116.3 436.5,118.8 442.5,125.0 448.5,132.6 454.5,138.8 460.5,145.0 466.6,151.4 472.6,153.9 484.6,158.9 490.6,155.0 502.6,155.0 508.6,150.0 512.5,143.9 525.0,137.6 532.5,138.2 544.6,132.6 556.5,122.6 568.0,112.6 580.0,102.6 592.0,96.3 598.0,93.0 604.0,93.8 610.0,96.3 622.0,97.0 628.0,95.0 640.0,93.8 646.4,96.3 658.0,101.3 664.0,105.0 670.0,112.6 676.0,116.3 688.0,118.2 694.0,116.3 711.0,117.3 724.0,116.0 736.0,113.0 748.0,111.0 754.0,107.0 766.0,104.0 778.0,102.0 787.6,97.5 793.9,93.8 800.0,92.0 806.4,93.8 826.0,95.0 838.0,96.0 850.0,99.0 862.0,102.0 871.0,104.0 880.0,107.0 900.0,107.0 930.0,106.0 952.0,105.0 964.0,100.0 970.0,98.0 976.5,110.0 982.6,122.6 988.4,130.0 994.5,142.6 1000.5,148.2 1006.5,146.4 1012.5,149.0 1018.5,150.0 1024.5,152.0 1030.5,153.8 1048.5,160.0 1060.4,170.0 1066.4,178.8 1072.5,183.9 1078.5,183.2 1084.5,181.4 1090.5,175.0 1096.5,168.8 1108.5,161.3 1114.5,159.4 1126.5,161.3 1132.5,160.0 1144.6,159.4 1156.6,157.6 1162.6,151.3 1168.6,147.6 1174.6,142.5 1180.6,137.5 1186.6,135.0 1192.6,135.0 1204.5,140.0 1216.5,140.0 1228.5,136.3 1240.5,135.0 1252.5,137.6 1264.5,136.3 1270.6,135.0" fill="none" stroke="#ff0000" stroke-width="1" />
<line x1="4.5" y1="57.9" x2="4.5" y2="66.5" stroke="#0000ff" stroke-width="1"/>
<line x1="3.0" y1="66.5" x2="6.0" y2="66.5" stroke="#0000ff" stroke-width="1"/>
<line x1="10.5" y1="57.9" x2="10.5" y2="66.5" stroke="#0000ff" stroke-width="1"/>
<line x1="9.0" y1="66.5" x2="12.0" y2="66.5" stroke="#0000ff" stroke-width="1"/>
<line x1="16.5" y1="57.9" x2="16.5" y2="66.5" stroke="#ff0000" stroke-width="1"/>
<line x1="15.0" y1="57.9" x2="18.0" y2="57.9" stroke="#ff0000" stroke-width="1"/>
<line x1="22.5" y1="57.9" x2="22.5" y2="66.5" stroke="#0000ff" stroke-width="1"/>
<rect x="21.0" y="57.9" width="3" height="8.6" fill="#0000ff"/>
<line x1="28.5" y1="57.9" x2="28.5" y2="75.1" stroke="#0000ff" stroke-width="1"/>
<line x1="27.0" y1="66.5" x2="30.0" y2="66.5" stroke="#0000ff" stroke-width="1"/>
<line x1="34.5" y1="57.9" x2="34.5" y2="75.1" stroke="#ff0000" stroke-width="1"/>
<rect x="33.0" y="57.9" width="3" height="8.6" fill="#ff0000"/>
<line x1="40.5" y1="57.9" x2="40.5" y2="66.5" stroke="#0000ff" stroke-width="1"/>
<line x1="39.0" y1="57.9" x2="42.0" y2="57.9" stroke="#0000ff" stroke-width="1"/>
<line x1="46.5" y1="66.5" x2="46.5" y2="66.5" stroke="#0000ff" stroke-width="1"/>
<line x1="45.0" y1="66.5" x2="48.0" y2="66.5" stroke="#0000ff" stroke-width="1"/>
<line x1="52.5" y1="32.1" x2="52.5" y2="83.7" stroke="#0000ff" stroke-width="1"/>
<rect x="51.0" y="32.1" width="3" height="43.0" fill="#0000ff"/>
<line x1="58.5" y1="66.5" x2="58.5" y2="92.3" stroke="#0000ff" stroke-width="1"/>
<rect x="57.0" y="66.5" width="3" height="17.2" fill="#0000ff"/>
<line x1="64.5" y1="75.1" x2="64.5" y2="109.5" stroke="#0000ff" stroke-width="1"/>
<rect x="63.0" y="83.7" width="3" height="17.2" fill="#0000ff"/>
<line x1="70.5" y1="88.9" x2="70.5" y2="118.1" stroke="#0000ff" stroke-width="1"/>
<rect x="69.0" y="92.3" width="3" height="8.6" fill="#0000ff"/>
<line x1="76.5" y1="75.1" x2="76.5" y2="126.7" stroke="#0000ff" stroke-width="1"/>
<rect x="75.0" y="100.9" width="3" height="17.2" fill="#0000ff"/>
<line x1="82.5" y1="109.5" x2="82.5" y2="126.7" stroke="#0000ff" stroke-width="1"/>
<line x1="81.0" y1="126.7" x2="84.0" y2="126.7" stroke="#0000ff" stroke-width="1"/>
<line x1="88.5" y1="109.5" x2="88.5" y2="126.7" stroke="#ff0000" stroke-width="1"/>
<rect x="87.0" y="109.5" width="3" height="17.2" fill="#ff0000"/>
<line x1="94.5" y1="109.5" x2="94.5" y2="135.3" stroke="#0000ff" stroke-width="1"/>
<rect x="93.0" y="118.1" width="3" height="8.6" fill="#0000ff"/>
<line x1="100.5" y1="109.5" x2="100.5" y2="126.7" stroke="#ff0000" stroke-width="1"/>
<rect x="99.0" y="109.5" width="3" height="17.2" fill="#ff0000"/>
<line x1="106.5" y1="109.5" x2="106.5" y2="126.7" stroke="#0000ff" stroke-width="1"/>
<rect x="105.0" y="109.5" width="3" height="17.2" fill="#0000ff"/>
<line x1="112.5" y1="118.1" x2="112.5" y2="126.7" stroke="#0000ff" stroke-width="1"/>
<rect x="111.0" y="118.1" width="3" height="8.6" fill="#0000ff"/>
<line x1="118.5" y1="97.5" x2="118.5" y2="126.7" stroke="#ff0000" stroke-width="1"/>
<rect x="117.0" y="100.9" width="3" height="17.2" fill="#ff0000"/>
<line x1="124.5" y1="92.3" x2="124.5" y2="126.7" stroke="#0000ff" stroke-width="1"/>
<rect x="123.0" y="100.9" width="3" height="17.2" fill="#0000ff"/>
<line x1="130.5" y1="109.5" x2="130.5" y2="126.7" stroke="#0000ff" stroke-width="1"/>
<line x1="129.0" y1="118.1" x2="132.0" y2="118.1" stroke="#0000ff" stroke-width="1"/>
<line x1="136.5" y1="118.1" x2="136.5" y2="143.9" stroke="#0000ff" stroke-width="1"/>
<line x1="135.0" y1="126.7" x2="138.0" y2="126.7" stroke="#0000ff" stroke-width="1"/>
<line x1="142.5" y1="118.1" x2="142.5" y2="135.3" stroke="#ff0000" stroke-width="1"/>
<rect x="141.0" y="118.1" width="3" height="17.2" fill="#ff0000"/>
<line x1="148.5" y1="109.5" x2="148.5" y2="126.7" stroke="#0000ff" stroke-width="1"/>
<line x1="147.0" y1="118.1" x2="150.0" y2="118.1" stroke="#0000ff" stroke-width="1"/>
<line x1="154.5" y1="109.5" x2="154.5" y2="126.7" stroke="#0000ff" stroke-width="1"/>
<line x1="153.0" y1="118.1" x2="156.0" y2="118.1" stroke="#0000ff" stroke-width="1"/>
<line x1="160.5" y1="109.5" x2="160.5" y2="135.3" stroke="#0000ff" stroke-width="1"/>
<rect x="159.0" y="118.1" width="3" height="8.6" fill="#0000ff"/>
<line x1="166.5" y1="109.5" x2="166.5" y2="126.7" stroke="#0000ff" stroke-width="1"/>
<line x1="165.0" y1="126.7" x2="168.0" y2="126.7" stroke="#0000ff" stroke-width="1"/>
<line x1="172.5" y1="118.1" x2="172.5" y2="126.7" stroke="#ff0000" stroke-width="1"/>
<rect x="171.0" y="118.1" width="3" height="8.6" fill="#ff0000"/>
<line x1="178.5" y1="118.1" x2="178.5" y2="126.7" stroke="#0000ff" stroke-width="1"/>
<rect x="177.0" y="118.1" width="3" height="8.6" fill="#0000ff"/>
<line x1="184.5" y1="118.1" x2="184.5" y2="126.7" stroke="#0000ff" stroke-width="1"/>
<line x1="183.0" y1="126.7" x2="186.0" y2="126.7" stroke="#0000ff" stroke-width="1"/>
<line x1="190.5" y1="118.1" x2="190.5" y2="126.7" stroke="#0000ff" stroke-width="1"/>
<line x1="189.0" y1="126.7" x2="192.0" y2="126.7" stroke="#0000ff" stroke-width="1"/>
<line x1="196.5" y1="118.1" x2="196.5" y2="143.9" stroke="#0000ff" stroke-width="1"/>
<rect x="195.0" y="126.7" width="3" height="17.2" fill="#0000ff"/>
<line x1="202.5" y1="135.3" x2="202.5" y2="143.9" stroke="#0000ff" stroke-width="1"/>
<line x1="201.0" y1="143.9" x2="204.0" y2="143.9" stroke="#0000ff" stroke-width="1"/>
<line x1="208.5" y1="135.3" x2="208.5" y2="152.5" stroke="#0000ff" stroke-width="1"/>
<rect x="207.0" y="143.9" width="3" height="8.6" fill="#0000ff"/>
<line x1="214.5" y1="152.5" x2="214.5" y2="161.1" stroke="#0000ff" stroke-width="1"/>
<rect x="213.0" y="152.5" width="3" height="8.6" fill="#0000ff"/>
<line x1="220.5" y1="152.5" x2="220.5" y2="161.1" stroke="#ff0000" stroke-width="1"/>
<rect x="219.0" y="152.5" width="3" height="8.6" fill="#ff0000"/>
<line x1="226.5" y1="143.9" x2="226.5" y2="161.1" stroke="#ff0000" stroke-width="1"/>
<rect x="225.0" y="143.9" width="3" height="8.6" fill="#ff0000"/>
<line x1="232.5" y1="143.9" x2="232.5" y2="161.1" stroke="#0000ff" stroke-width="1"/>
<rect x="231.0" y="143.9" width="3" height="8.6" fill="#0000ff"/>
<line x1="238.5" y1="143.9" x2="238.5" y2="161.1" stroke="#ff0000" stroke-width="1"/>
<rect x="237.0" y="143.9" width="3" height="17.2" fill="#ff0000"/>
<line x1="244.5" y1="135.3" x2="244.5" y2="152.5" stroke="#ff0000" stroke-width="1"/>
<rect x="243.0" y="143.9" width="3" height="8.6" fill="#ff0000"/>
<line x1="250.5" y1="143.9" x2="250.5" y2="152.5" stroke="#0000ff" stroke-width="1"/>
<line x1="249.0" y1="143.9" x2="252.0" y2="143.9" stroke="#0000ff" stroke-width="1"/>
<line x1="256.5" y1="143.9" x2="256.5" y2="152.5" stroke="#ff0000" stroke-width="1"/>
<rect x="255.0" y="143.9" width="3" height="8.6" fill="#ff0000"/>
<line x1="262.5" y1="143.9" x2="262.5" y2="152.5" stroke="#0000ff" stroke-width="1"/>
<line x1="261.0" y1="152.5" x2="264.0" y2="152.5" stroke="#0000ff" stroke-width="1"/>
<line x1="268.5" y1="143.9" x2="268.5" y2="152.5" stroke="#0000ff" stroke-width="1"/>
<line x1="267.0" y1="152.5" x2="270.0" y2="152.5" stroke="#0000ff" stroke-width="1"/>
<line x1="274.5" y1="143.9" x2="274.5" y2="152.5" stroke="#0000ff" stroke-width="1"/>
<rect x="273.0" y="143.9" width="3" height="8.6" fill="#0000ff"/>
<line x1="280.5" y1="135.3" x2="280.5" y2="152.5" stroke="#ff0000" stroke-width="1"/>
<rect x="279.0" y="135.3" width="3" height="8.6" fill="#ff0000"/>
<line x1="286.5" y1="135.3" x2="286.5" y2="143.9" stroke="#0000ff" stroke-width="1"/>
<rect x="285.0" y="135.3" width="3" height="8.6" fill="#0000ff"/>
<line x1="292.5" y1="135.3" x2="292.5" y2="143.9" stroke="#ff0000" stroke-width="1"/>
<line x1="291.0" y1="135.3" x2="294.0" y2="135.3" stroke="#ff0000" stroke-width="1"/>
<line x1="298.5" y1="135.3" x2="298.5" y2="143.9" stroke="#0000ff" stroke-width="1"/>
<line x1="297.0" y1="135.3" x2="300.0" y2="135.3" stroke="#0000ff" stroke-width="1"/>
<line x1="304.5" y1="100.9" x2="304.5" y2="143.9" stroke="#ff0000" stroke-width="1"/>
<rect x="303.0" y="118.1" width="3" height="17.2" fill="#ff0000"/>
<line x1="310.5" y1="109.5" x2="310.5" y2="126.7" stroke="#ff0000" stroke-width="1"/>
<line x1="309.0" y1="109.5" x2="312.0" y2="109.5" stroke="#ff0000" stroke-width="1"/>
<line x1="316.5" y1="109.5" x2="316.5" y2="118.1" stroke="#0000ff" stroke-width="1"/>
<line x1="315.0" y1="109.5" x2="318.0" y2="109.5" stroke="#0000ff" stroke-width="1"/>
<line x1="322.5" y1="118.1" x2="322.5" y2="135.3" stroke="#0000ff" stroke-width="1"/>
<rect x="321.0" y="118.1" width="3" height="17.2" fill="#0000ff"/>
<line x1="328.5" y1="118.1" x2="328.5" y2="135.3" stroke="#ff0000" stroke-width="1"/>
<rect x="327.0" y="118.1" width="3" height="8.6" fill="#ff0000"/>
<line x1="334.5" y1="118.1" x2="334.5" y2="126.7" stroke="#0000ff" stroke-width="1"/>
<line x1="333.0" y1="118.1" x2="336.0" y2="118.1" stroke="#0000ff" stroke-width="1"/>
<line x1="340.5" y1="118.1" x2="340.5" y2="126.7" stroke="#0000ff" stroke-width="1"/>
<line x1="339.0" y1="126.7" x2="342.0" y2="126.7" stroke="#0000ff" stroke-width="1"/>
<line x1="346.5" y1="118.1" x2="346.5" y2="143.9" stroke="#0000ff" stroke-width="1"/>
<rect x="345.0" y="126.7" width="3" height="17.2" fill="#0000ff"/>
<line x1="352.5" y1="135.3" x2="352.5" y2="152.5" stroke="#ff0000" stroke-width="1"/>
<rect x="351.0" y="135.3" width="3" height="8.6" fill="#ff0000"/>
<line x1="358.5" y1="135.3" x2="358.5" y2="143.9" stroke="#0000ff" stroke-width="1"/>
<line x1="357.0" y1="135.3" x2="360.0" y2="135.3" stroke="#0000ff" stroke-width="1"/>
<line x1="364.5" y1="126.7" x2="364.5" y2="135.3" stroke="#ff0000" stroke-width="1"/>
<line x1="363.0" y1="126.7" x2="366.0" y2="126.7" stroke="#ff0000" stroke-width="1"/>
<line x1="370.5" y1="126.7" x2="370.5" y2="135.3" stroke="#0000ff" stroke-width="1"/>
<line x1="369.0" y1="126.7" x2="372.0" y2="126.7" stroke="#0000ff" stroke-width="1"/>
<line x1="376.5" y1="135.3" x2="376.5" y2="143.9" stroke="#0000ff" stroke-width="1"/>
<rect x="375.0" y="135.3" width="3" height="8.6" fill="#0000ff"/>
<line x1="382.5" y1="126.7" x2="382.5" y2="143.9" stroke="#ff0000" stroke-width="1"/>
<rect x="381.0" y="126.7" width="3" height="8.6" fill="#ff0000"/>
<line x1="388.5" y1="126.7" x2="388.5" y2="135.3" stroke="#0000ff" stroke-width="1"/>
<line x1="387.0" y1="126.7" x2="390.0" y2="126.7" stroke="#0000ff" stroke-width="1"/>
<line x1="394.5" y1="109.5" x2="394.5" y2="126.7" stroke="#ff0000" stroke-width="1"/>
<rect x="393.0" y="118.1" width="3" height="8.6" fill="#ff0000"/>
<line x1="400.5" y1="118.1" x2="400.5" y2="135.3" stroke="#0000ff" stroke-width="1"/>
<rect x="399.0" y="118.1" width="3" height="8.6" fill="#0000ff"/>
<line x1="406.5" y1="109.5" x2="406.5" y2="135.3" stroke="#ff0000" stroke-width="1"/>
<rect x="405.0" y="118.1" width="3" height="8.6" fill="#ff0000"/>
<line x1="412.5" y1="118.1" x2="412.5" y2="126.7" stroke="#0000ff" stroke-width="1"/>
<line x1="411.0" y1="118.1" x2="414.0" y2="118.1" stroke="#0000ff" stroke-width="1"/>
<line x1="418.5" y1="100.9" x2="418.5" y2="118.1" stroke="#ff0000" stroke-width="1"/>
<rect x="417.0" y="109.5" width="3" height="8.6" fill="#ff0000"/>
<line x1="424.5" y1="109.5" x2="424.5" y2="118.1" stroke="#0000ff" stroke-width="1"/>
<rect x="423.0" y="109.5" width="3" height="8.6" fill="#0000ff"/>
<line x1="430.5" y1="118.1" x2="430.5" y2="126.7" stroke="#0000ff" stroke-width="1"/>
<line x1="429.0" y1="118.1" x2="432.0" y2="118.1" stroke="#0000ff" stroke-width="1"/>
<line x1="436.5" y1="118.1" x2="436.5" y2="143.9" stroke="#0000ff" stroke-width="1"/>
<rect x="435.0" y="118.1" width="3" height="17.2" fill="#0000ff"/>
<line x1="442.5" y1="135.3" x2="442.5" y2="161.1" stroke="#0000ff" stroke-width="1"/>
<rect x="441.0" y="135.3" width="3" height="8.6" fill="#0000ff"/>
<line x1="448.5" y1="143.9" x2="448.5" y2="161.1" stroke="#0000ff" stroke-width="1"/>
<line x1="447.0" y1="152.5" x2="450.0" y2="152.5" stroke="#0000ff" stroke-width="1"/>
<line x1="454.5" y1="143.9" x2="454.5" y2="152.5" stroke="#ff0000" stroke-width="1"/>
<rect x="453.0" y="143.9" width="3" height="8.6" fill="#ff0000"/>
<line x1="460.5" y1="143.9" x2="460.5" y2="161.1" stroke="#0000ff" stroke-width="1"/>
<rect x="459.0" y="143.9" width="3" height="17.2" fill="#0000ff"/>
<line x1="466.5" y1="152.5" x2="466.5" y2="161.1" stroke="#0000ff" stroke-width="1"/>
<line x1="465.0" y1="161.1" x2="468.0" y2="161.1" stroke="#0000ff" stroke-width="1"/>
<line x1="472.5" y1="152.5" x2="472.5" y2="169.7" stroke="#ff0000" stroke-width="1"/>
<rect x="471.0" y="152.5" width="3" height="8.6" fill="#ff0000"/>
<line x1="478.5" y1="152.5" x2="478.5" y2="178.3" stroke="#0000ff" stroke-width="1"/>
<line x1="477.0" y1="161.1" x2="480.0" y2="161.1" stroke="#0000ff" stroke-width="1"/>
<line x1="484.5" y1="161.1" x2="484.5" y2="186.9" stroke="#ff0000" stroke-width="1"/>
<rect x="483.0" y="161.1" width="3" height="8.6" fill="#ff0000"/>
<line x1="490.5" y1="152.5" x2="490.5" y2="178.3" stroke="#ff0000" stroke-width="1"/>
<rect x="489.0" y="152.5" width="3" height="8.6" fill="#ff0000"/>
<line x1="496.5" y1="152.5" x2="496.5" y2="152.5" stroke="#0000ff" stroke-width="1"/>
<line x1="495.0" y1="152.5" x2="498.0" y2="152.5" stroke="#0000ff" stroke-width="1"/>
<line x1="502.5" y1="143.9" x2="502.5" y2="143.9" stroke="#ff0000" stroke-width="1"/>
<line x1="501.0" y1="143.9" x2="504.0" y2="143.9" stroke="#ff0000" stroke-width="1"/>
<line x1="508.5" y1="126.7" x2="508.5" y2="143.9" stroke="#ff0000" stroke-width="1"/>
<rect x="507.0" y="135.3" width="3" height="8.6" fill="#ff0000"/>
<line x1="514.5" y1="118.1" x2="514.5" y2="143.9" stroke="#ff0000" stroke-width="1"/>
<rect x="513.0" y="126.7" width="3" height="17.2" fill="#ff0000"/>
<line x1="520.5" y1="118.1" x2="520.5" y2="135.3" stroke="#0000ff" stroke-width="1"/>
<rect x="519.0" y="126.7" width="3" height="8.6" fill="#0000ff"/>
<line x1="526.5" y1="118.1" x2="526.5" y2="135.3" stroke="#0000ff" stroke-width="1"/>
<line x1="525.0" y1="135.3" x2="528.0" y2="135.3" stroke="#0000ff" stroke-width="1"/>
<line x1="532.5" y1="118.1" x2="532.5" y2="161.1" stroke="#0000ff" stroke-width="1"/>
<rect x="531.0" y="135.3" width="3" height="17.2" fill="#0000ff"/>
<line x1="538.5" y1="135.3" x2="538.5" y2="152.5" stroke="#ff0000" stroke-width="1"/>
<rect x="537.0" y="135.3" width="3" height="17.2" fill="#ff0000"/>
<line x1="544.5" y1="118.1" x2="544.5" y2="143.9" stroke="#ff0000" stroke-width="1"/>
<rect x="543.0" y="126.7" width="3" height="8.6" fill="#ff0000"/>
<line x1="550.5" y1="118.1" x2="550.5" y2="135.3" stroke="#0000ff" stroke-width="1"/>
<line x1="549.0" y1="126.7" x2="552.0" y2="126.7" stroke="#0000ff" stroke-width="1"/>
<line x1="556.5" y1="100.9" x2="556.5" y2="126.7" stroke="#ff0000" stroke-width="1"/>
<rect x="555.0" y="109.5" width="3" height="17.2" fill="#ff0000"/>
<line x1="562.5" y1="100.9" x2="562.5" y2="126.7" stroke="#0000ff" stroke-width="1"/>
<line x1="561.0" y1="109.5" x2="564.0" y2="109.5" stroke="#0000ff" stroke-width="1"/>
<line x1="568.5" y1="100.9" x2="568.5" y2="118.1" stroke="#ff0000" stroke-width="1"/>
<rect x="567.0" y="100.9" width="3" height="8.6" fill="#ff0000"/>
<line x1="574.5" y1="92.3" x2="574.5" y2="109.5" stroke="#ff0000" stroke-width="1"/>
<rect x="573.0" y="100.9" width="3" height="8.6" fill="#ff0000"/>
<line x1="580.5" y1="92.3" x2="580.5" y2="106.1" stroke="#ff0000" stroke-width="1"/>
<rect x="579.0" y="92.3" width="3" height="8.6" fill="#ff0000"/>
<line x1="586.5" y1="83.7" x2="586.5" y2="100.9" stroke="#0000ff" stroke-width="1"/>
<rect x="585.0" y="92.3" width="3" height="8.6" fill="#0000ff"/>
<line x1="592.5" y1="83.7" x2="592.5" y2="100.9" stroke="#ff0000" stroke-width="1"/>
<line x1="591.0" y1="92.3" x2="594.0" y2="92.3" stroke="#ff0000" stroke-width="1"/>
<line x1="598.5" y1="83.7" x2="598.5" y2="100.9" stroke="#ff0000" stroke-width="1"/>
<rect x="597.0" y="83.7" width="3" height="8.6" fill="#ff0000"/>
<line x1="604.5" y1="92.3" x2="604.5" y2="109.5" stroke="#0000ff" stroke-width="1"/>
<rect x="603.0" y="92.3" width="3" height="8.6" fill="#0000ff"/>
<line x1="610.5" y1="100.9" x2="610.5" y2="109.5" stroke="#0000ff" stroke-width="1"/>
<rect x="609.0" y="100.9" width="3" height="8.6" fill="#0000ff"/>
<line x1="616.5" y1="92.3" x2="616.5" y2="109.5" stroke="#ff0000" stroke-width="1"/>
<rect x="615.0" y="100.9" width="3" height="8.6" fill="#ff0000"/>
<line x1="622.5" y1="100.9" x2="622.5" y2="109.5" stroke="#0000ff" stroke-width="1"/>
<line x1="621.0" y1="100.9" x2="624.0" y2="100.9" stroke="#0000ff" stroke-width="1"/>
<line x1="628.5" y1="92.3" x2="628.5" y2="109.5" stroke="#ff0000" stroke-width="1"/>
<rect x="627.0" y="100.9" width="3" height="8.6" fill="#ff0000"/>
<line x1="634.5" y1="92.3" x2="634.5" y2="100.9" stroke="#ff0000" stroke-width="1"/>
<rect x="633.0" y="92.3" width="3" height="8.6" fill="#ff0000"/>
<line x1="640.5" y1="83.7" x2="640.5" y2="100.9" stroke="#ff0000" stroke-width="1"/>
<rect x="639.0" y="83.7" width="3" height="17.2" fill="#ff0000"/>
<line x1="646.5" y1="83.7" x2="646.5" y2="109.5" stroke="#0000ff" stroke-width="1"/>
<rect x="645.0" y="83.7" width="3" height="25.8" fill="#0000ff"/>
<line x1="652.5" y1="100.9" x2="652.5" y2="118.1" stroke="#0000ff" stroke-width="1"/>
<rect x="651.0" y="100.9" width="3" height="8.6" fill="#0000ff"/>
<line x1="658.5" y1="100.9" x2="658.5" y2="118.1" stroke="#0000ff" stroke-width="1"/>
<line x1="657.0" y1="109.5" x2="660.0" y2="109.5" stroke="#0000ff" stroke-width="1"/>
<line x1="664.5" y1="109.5" x2="664.5" y2="118.1" stroke="#0000ff" stroke-width="1"/>
<rect x="663.0" y="109.5" width="3" height="8.6" fill="#0000ff"/>
<line x1="670.5" y1="118.1" x2="670.5" y2="126.7" stroke="#0000ff" stroke-width="1"/>
<rect x="669.0" y="118.1" width="3" height="8.6" fill="#0000ff"/>
<line x1="676.5" y1="118.1" x2="676.5" y2="126.7" stroke="#ff0000" stroke-width="1"/>
<line x1="675.0" y1="118.1" x2="678.0" y2="118.1" stroke="#ff0000" stroke-width="1"/>
<line x1="682.5" y1="118.1" x2="682.5" y2="126.7" stroke="#0000ff" stroke-width="1"/>
<rect x="681.0" y="118.1" width="3" height="8.6" fill="#0000ff"/>
<line x1="688.5" y1="118.1" x2="688.5" y2="126.7" stroke="#ff0000" stroke-width="1"/>
<line x1="687.0" y1="118.1" x2="690.0" y2="118.1" stroke="#ff0000" stroke-width="1"/>
<line x1="694.5" y1="109.5" x2="694.5" y2="126.7" stroke="#ff0000" stroke-width="1"/>
<rect x="693.0" y="109.5" width="3" height="17.2" fill="#ff0000"/>
<line x1="700.5" y1="109.5" x2="700.5" y2="126.7" stroke="#0000ff" stroke-width="1"/>
<line x1="699.0" y1="118.1" x2="702.0" y2="118.1" stroke="#0000ff" stroke-width="1"/>
<line x1="706.5" y1="118.1" x2="706.5" y2="126.7" stroke="#0000ff" stroke-width="1"/>
<rect x="705.0" y="118.1" width="3" height="8.6" fill="#0000ff"/>
<line x1="712.5" y1="118.1" x2="712.5" y2="126.7" stroke="#ff0000" stroke-width="1"/>
<rect x="711.0" y="118.1" width="3" height="8.6" fill="#ff0000"/>
<line x1="718.5" y1="109.5" x2="718.5" y2="118.1" stroke="#0000ff" stroke-width="1"/>
<line x1="717.0" y1="118.1" x2="720.0" y2="118.1" stroke="#0000ff" stroke-width="1"/>
<line x1="724.5" y1="109.5" x2="724.5" y2="118.1" stroke="#0000ff" stroke-width="1"/>
<line x1="723.0" y1="118.1" x2="726.0" y2="118.1" stroke="#0000ff" stroke-width="1"/>
<line x1="730.5" y1="100.9" x2="730.5" y2="118.1" stroke="#ff0000" stroke-width="1"/>
<line x1="729.0" y1="109.5" x2="732.0" y2="109.5" stroke="#ff0000" stroke-width="1"/>
<line x1="736.5" y1="109.5" x2="736.5" y2="118.1" stroke="#0000ff" stroke-width="1"/>
<line x1="735.0" y1="109.5" x2="738.0" y2="109.5" stroke="#0000ff" stroke-width="1"/>
<line x1="742.5" y1="109.5" x2="742.5" y2="118.1" stroke="#0000ff" stroke-width="1"/>
<line x1="741.0" y1="109.5" x2="744.0" y2="109.5" stroke="#0000ff" stroke-width="1"/>
<line x1="748.5" y1="109.5" x2="748.5" y2="118.1" stroke="#0000ff" stroke-width="1"/>
<line x1="747.0" y1="109.5" x2="750.0" y2="109.5" stroke="#0000ff" stroke-width="1"/>
<line x1="754.5" y1="100.9" x2="754.5" y2="109.5" stroke="#ff0000" stroke-width="1"/>
<rect x="753.0" y="100.9" width="3" height="8.6" fill="#ff0000"/>
<line x1="760.5" y1="100.9" x2="760.5" y2="109.5" stroke="#ff0000" stroke-width="1"/>
<rect x="759.0" y="100.9" width="3" height="8.6" fill="#ff0000"/>
<line x1="766.5" y1="100.9" x2="766.5" y2="109.5" stroke="#0000ff" stroke-width="1"/>
<rect x="765.0" y="100.9" width="3" height="8.6" fill="#0000ff"/>
<line x1="772.5" y1="92.3" x2="772.5" y2="109.5" stroke="#ff0000" stroke-width="1"/>
<rect x="771.0" y="100.9" width="3" height="8.6" fill="#ff0000"/>
<line x1="778.5" y1="92.3" x2="778.5" y2="100.9" stroke="#ff0000" stroke-width="1"/>
<line x1="777.0" y1="92.3" x2="780.0" y2="92.3" stroke="#ff0000" stroke-width="1"/>
<line x1="784.5" y1="83.7" x2="784.5" y2="100.9" stroke="#0000ff" stroke-width="1"/>
<line x1="783.0" y1="92.3" x2="786.0" y2="92.3" stroke="#0000ff" stroke-width="1"/>
<line x1="790.5" y1="92.3" x2="790.5" y2="100.9" stroke="#0000ff" stroke-width="1"/>
<line x1="789.0" y1="92.3" x2="792.0" y2="92.3" stroke="#0000ff" stroke-width="1"/>
<line x1="796.5" y1="83.7" x2="796.5" y2="100.9" stroke="#0000ff" stroke-width="1"/>
<line x1="795.0" y1="92.3" x2="798.0" y2="92.3" stroke="#0000ff" stroke-width="1"/>
<line x1="802.5" y1="83.7" x2="802.5" y2="100.9" stroke="#0000ff" stroke-width="1"/>
<line x1="801.0" y1="92.3" x2="804.0" y2="92.3" stroke="#0000ff" stroke-width="1"/>
<line x1="808.5" y1="92.3" x2="808.5" y2="109.5" stroke="#0000ff" stroke-width="1"/>
<rect x="807.0" y="92.3" width="3" height="17.2" fill="#0000ff"/>
<line x1="814.5" y1="92.3" x2="814.5" y2="109.5" stroke="#ff0000" stroke-width="1"/>
<line x1="813.0" y1="100.9" x2="816.0" y2="100.9" stroke="#ff0000" stroke-width="1"/>
<line x1="820.5" y1="92.3" x2="820.5" y2="100.9" stroke="#ff0000" stroke-width="1"/>
<line x1="819.0" y1="92.3" x2="822.0" y2="92.3" stroke="#ff0000" stroke-width="1"/>
<line x1="826.5" y1="92.3" x2="826.5" y2="100.9" stroke="#ff0000" stroke-width="1"/>
<rect x="825.0" y="92.3" width="3" height="8.6" fill="#ff0000"/>
<line x1="832.5" y1="92.3" x2="832.5" y2="100.9" stroke="#0000ff" stroke-width="1"/>
<line x1="831.0" y1="92.3" x2="834.0" y2="92.3" stroke="#0000ff" stroke-width="1"/>
<line x1="838.5" y1="92.3" x2="838.5" y2="100.9" stroke="#0000ff" stroke-width="1"/>
<line x1="837.0" y1="100.9" x2="840.0" y2="100.9" stroke="#0000ff" stroke-width="1"/>
<line x1="844.5" y1="100.9" x2="844.5" y2="109.5" stroke="#0000ff" stroke-width="1"/>
<line x1="843.0" y1="100.9" x2="846.0" y2="100.9" stroke="#0000ff" stroke-width="1"/>
<line x1="850.5" y1="92.3" x2="850.5" y2="109.5" stroke="#0000ff" stroke-width="1"/>
<rect x="849.0" y="100.9" width="3" height="8.6" fill="#0000ff"/>
<line x1="856.5" y1="100.9" x2="856.5" y2="118.1" stroke="#0000ff" stroke-width="1"/>
<line x1="855.0" y1="109.5" x2="858.0" y2="109.5" stroke="#0000ff" stroke-width="1"/>
<line x1="862.5" y1="100.9" x2="862.5" y2="109.5" stroke="#ff0000" stroke-width="1"/>
<rect x="861.0" y="100.9" width="3" height="8.6" fill="#ff0000"/>
<line x1="868.5" y1="100.9" x2="868.5" y2="118.1" stroke="#0000ff" stroke-width="1"/>
<rect x="867.0" y="100.9" width="3" height="17.2" fill="#0000ff"/>
<line x1="874.5" y1="100.9" x2="874.5" y2="109.5" stroke="#ff0000" stroke-width="1"/>
<line x1="873.0" y1="109.5" x2="876.0" y2="109.5" stroke="#ff0000" stroke-width="1"/>
<line x1="880.5" y1="109.5" x2="880.5" y2="118.1" stroke="#0000ff" stroke-width="1"/>
<line x1="879.0" y1="109.5" x2="882.0" y2="109.5" stroke="#0000ff" stroke-width="1"/>
<line x1="886.5" y1="109.5" x2="886.5" y2="118.1" stroke="#0000ff" stroke-width="1"/>
<rect x="885.0" y="109.5" width="3" height="8.6" fill="#0000ff"/>
<line x1="892.5" y1="100.9" x2="892.5" y2="109.5" stroke="#ff0000" stroke-width="1"/>
<line x1="891.0" y1="109.5" x2="894.0" y2="109.5" stroke="#ff0000" stroke-width="1"/>
<line x1="898.5" y1="109.5" x2="898.5" y2="126.7" stroke="#0000ff" stroke-width="1"/>
<rect x="897.0" y="109.5" width="3" height="8.6" fill="#0000ff"/>
<line x1="904.5" y1="100.9" x2="904.5" y2="118.1" stroke="#ff0000" stroke-width="1"/>
<rect x="903.0" y="100.9" width="3" height="17.2" fill="#ff0000"/>
<line x1="910.5" y1="100.9" x2="910.5" y2="109.5" stroke="#0000ff" stroke-width="1"/>
<rect x="909.0" y="100.9" width="3" height="8.6" fill="#0000ff"/>
<line x1="916.5" y1="109.5" x2="916.5" y2="118.1" stroke="#0000ff" stroke-width="1"/>
<line x1="915.0" y1="109.5" x2="918.0" y2="109.5" stroke="#0000ff" stroke-width="1"/>
<line x1="922.5" y1="100.9" x2="922.5" y2="109.5" stroke="#0000ff" stroke-width="1"/>
<line x1="921.0" y1="109.5" x2="924.0" y2="109.5" stroke="#0000ff" stroke-width="1"/>
<line x1="928.5" y1="100.9" x2="928.5" y2="109.5" stroke="#ff0000" stroke-width="1"/>
<rect x="927.0" y="100.9" width="3" height="8.6" fill="#ff0000"/>
<line x1="934.5" y1="100.9" x2="934.5" y2="109.5" stroke="#0000ff" stroke-width="1"/>
<line x1="933.0" y1="100.9" x2="936.0" y2="100.9" stroke="#0000ff" stroke-width="1"/>
<line x1="940.5" y1="100.9" x2="940.5" y2="109.5" stroke="#0000ff" stroke-width="1"/>
<line x1="939.0" y1="109.5" x2="942.0" y2="109.5" stroke="#0000ff" stroke-width="1"/>
<line x1="946.5" y1="109.5" x2="946.5" y2="118.1" stroke="#0000ff" stroke-width="1"/>
<rect x="945.0" y="109.5" width="3" height="8.6" fill="#0000ff"/>
<line x1="952.5" y1="109.5" x2="952.5" y2="118.1" stroke="#0000ff" stroke-width="1"/>
<line x1="951.0" y1="118.1" x2="954.0" y2="118.1" stroke="#0000ff" stroke-width="1"/>
<line x1="958.5" y1="92.3" x2="958.5" y2="109.5" stroke="#ff0000" stroke-width="1"/>
<rect x="957.0" y="100.9" width="3" height="8.6" fill="#ff0000"/>
<line x1="964.5" y1="83.7" x2="964.5" y2="100.9" stroke="#ff0000" stroke-width="1"/>
<rect x="963.0" y="92.3" width="3" height="8.6" fill="#ff0000"/>
<line x1="970.5" y1="83.7" x2="970.5" y2="100.9" stroke="#0000ff" stroke-width="1"/>
<line x1="969.0" y1="92.3" x2="972.0" y2="92.3" stroke="#0000ff" stroke-width="1"/>
<line x1="976.5" y1="100.9" x2="976.5" y2="178.3" stroke="#0000ff" stroke-width="1"/>
<rect x="975.0" y="100.9" width="3" height="68.8" fill="#0000ff"/>
<line x1="982.5" y1="152.5" x2="982.5" y2="169.7" stroke="#ff0000" stroke-width="1"/>
<rect x="981.0" y="161.1" width="3" height="8.6" fill="#ff0000"/>
<line x1="988.5" y1="126.7" x2="988.5" y2="169.7" stroke="#ff0000" stroke-width="1"/>
<rect x="987.0" y="143.9" width="3" height="17.2" fill="#ff0000"/>
<line x1="994.5" y1="126.7" x2="994.5" y2="143.9" stroke="#ff0000" stroke-width="1"/>
<line x1="993.0" y1="135.3" x2="996.0" y2="135.3" stroke="#ff0000" stroke-width="1"/>
<line x1="1000.5" y1="126.7" x2="1000.5" y2="143.9" stroke="#0000ff" stroke-width="1"/>
<line x1="999.0" y1="135.3" x2="1002.0" y2="135.3" stroke="#0000ff" stroke-width="1"/>
<line x1="1006.5" y1="135.3" x2="1006.5" y2="152.5" stroke="#0000ff" stroke-width="1"/>
<rect x="1005.0" y="135.3" width="3" height="17.2" fill="#0000ff"/>
<line x1="1012.5" y1="135.3" x2="1012.5" y2="161.1" stroke="#0000ff" stroke-width="1"/>
<rect x="1011.0" y="143.9" width="3" height="8.6" fill="#0000ff"/>
<line x1="1018.5" y1="152.5" x2="1018.5" y2="169.7" stroke="#0000ff" stroke-width="1"/>
<line x1="1017.0" y1="161.1" x2="1020.0" y2="161.1" stroke="#0000ff" stroke-width="1"/>
<line x1="1024.5" y1="152.5" x2="1024.5" y2="178.3" stroke="#0000ff" stroke-width="1"/>
<rect x="1023.0" y="161.1" width="3" height="8.6" fill="#0000ff"/>
<line x1="1030.5" y1="135.3" x2="1030.5" y2="169.7" stroke="#ff0000" stroke-width="1"/>
<rect x="1029.0" y="143.9" width="3" height="25.8" fill="#ff0000"/>
<line x1="1036.5" y1="135.3" x2="1036.5" y2="152.5" stroke="#ff0000" stroke-width="1"/>
<rect x="1035.0" y="143.9" width="3" height="8.6" fill="#ff0000"/>
<line x1="1042.5" y1="143.9" x2="1042.5" y2="169.7" stroke="#0000ff" stroke-width="1"/>
<rect x="1041.0" y="143.9" width="3" height="17.2" fill="#0000ff"/>
<line x1="1048.5" y1="161.1" x2="1048.5" y2="186.9" stroke="#0000ff" stroke-width="1"/>
<rect x="1047.0" y="161.1" width="3" height="17.2" fill="#0000ff"/>
<line x1="1054.5" y1="169.7" x2="1054.5" y2="186.9" stroke="#0000ff" stroke-width="1"/>
<line x1="1053.0" y1="178.3" x2="1056.0" y2="178.3" stroke="#0000ff" stroke-width="1"/>
<line x1="1060.5" y1="178.3" x2="1060.5" y2="204.1" stroke="#0000ff" stroke-width="1"/>
<rect x="1059.0" y="178.3" width="3" height="17.2" fill="#0000ff"/>
<line x1="1066.5" y1="178.3" x2="1066.5" y2="195.5" stroke="#ff0000" stroke-width="1"/>
<rect x="1065.0" y="186.9" width="3" height="8.6" fill="#ff0000"/>
<line x1="1072.5" y1="169.7" x2="1072.5" y2="186.9" stroke="#ff0000" stroke-width="1"/>
<rect x="1071.0" y="178.3" width="3" height="8.6" fill="#ff0000"/>
<line x1="1078.5" y1="178.3" x2="1078.5" y2="186.9" stroke="#0000ff" stroke-width="1"/>
<line x1="1077.0" y1="178.3" x2="1080.0" y2="178.3" stroke="#0000ff" stroke-width="1"/>
<line x1="1084.5" y1="161.1" x2="1084.5" y2="178.3" stroke="#ff0000" stroke-width="1"/>
<rect x="1083.0" y="169.7" width="3" height="8.6" fill="#ff0000"/>
<line x1="1090.5" y1="152.5" x2="1090.5" y2="161.1" stroke="#ff0000" stroke-width="1"/>
<line x1="1089.0" y1="161.1" x2="1092.0" y2="161.1" stroke="#ff0000" stroke-width="1"/>
<line x1="1096.5" y1="152.5" x2="1096.5" y2="161.1" stroke="#0000ff" stroke-width="1"/>
<rect x="1095.0" y="152.5" width="3" height="8.6" fill="#0000ff"/>
<line x1="1102.5" y1="152.5" x2="1102.5" y2="161.1" stroke="#ff0000" stroke-width="1"/>
<rect x="1101.0" y="152.5" width="3" height="8.6" fill="#ff0000"/>
<line x1="1108.5" y1="152.5" x2="1108.5" y2="161.1" stroke="#0000ff" stroke-width="1"/>
<line x1="1107.0" y1="161.1" x2="1110.0" y2="161.1" stroke="#0000ff" stroke-width="1"/>
<line x1="1114.5" y1="152.5" x2="1114.5" y2="161.1" stroke="#0000ff" stroke-width="1"/>
<line x1="1113.0" y1="161.1" x2="1116.0" y2="161.1" stroke="#0000ff" stroke-width="1"/>
<line x1="1120.5" y1="161.1" x2="1120.5" y2="169.7" stroke="#0000ff" stroke-width="1"/>
<rect x="1119.0" y="161.1" width="3" height="8.6" fill="#0000ff"/>
<line x1="1126.5" y1="161.1" x2="1126.5" y2="169.7" stroke="#ff0000" stroke-width="1"/>
<rect x="1125.0" y="161.1" width="3" height="8.6" fill="#ff0000"/>
<line x1="1132.5" y1="143.9" x2="1132.5" y2="169.7" stroke="#ff0000" stroke-width="1"/>
<rect x="1131.0" y="152.5" width="3" height="8.6" fill="#ff0000"/>
<line x1="1138.5" y1="152.5" x2="1138.5" y2="161.1" stroke="#0000ff" stroke-width="1"/>
<rect x="1137.0" y="152.5" width="3" height="8.6" fill="#0000ff"/>
<line x1="1144.5" y1="152.5" x2="1144.5" y2="161.1" stroke="#0000ff" stroke-width="1"/>
<line x1="1143.0" y1="161.1" x2="1146.0" y2="161.1" stroke="#0000ff" stroke-width="1"/>
<line x1="1150.5" y1="152.5" x2="1150.5" y2="161.1" stroke="#ff0000" stroke-width="1"/>
<rect x="1149.0" y="152.5" width="3" height="8.6" fill="#ff0000"/>
<line x1="1156.5" y1="143.9" x2="1156.5" y2="152.5" stroke="#0000ff" stroke-width="1"/>
<rect x="1155.0" y="143.9" width="3" height="8.6" fill="#0000ff"/>
<line x1="1162.5" y1="135.3" x2="1162.5" y2="152.5" stroke="#ff0000" stroke-width="1"/>
<rect x="1161.0" y="135.3" width="3" height="17.2" fill="#ff0000"/>
<line x1="1168.5" y1="135.3" x2="1168.5" y2="143.9" stroke="#0000ff" stroke-width="1"/>
<line x1="1167.0" y1="135.3" x2="1170.0" y2="135.3" stroke="#0000ff" stroke-width="1"/>
<line x1="1174.5" y1="135.3" x2="1174.5" y2="143.9" stroke="#ff0000" stroke-width="1"/>
<rect x="1173.0" y="135.3" width="3" height="8.6" fill="#ff0000"/>
<line x1="1180.5" y1="126.7" x2="1180.5" y2="135.3" stroke="#ff0000" stroke-width="1"/>
<rect x="1179.0" y="126.7" width="3" height="8.6" fill="#ff0000"/>
<line x1="1186.5" y1="126.7" x2="1186.5" y2="140.5" stroke="#0000ff" stroke-width="1"/>
<rect x="1185.0" y="126.7" width="3" height="8.6" fill="#0000ff"/>
<line x1="1192.5" y1="126.7" x2="1192.5" y2="140.5" stroke="#0000ff" stroke-width="1"/>
<line x1="1191.0" y1="135.3" x2="1194.0" y2="135.3" stroke="#0000ff" stroke-width="1"/>
<line x1="1198.5" y1="135.3" x2="1198.5" y2="143.9" stroke="#0000ff" stroke-width="1"/>
<line x1="1197.0" y1="135.3" x2="1200.0" y2="135.3" stroke="#0000ff" stroke-width="1"/>
<line x1="1204.5" y1="135.3" x2="1204.5" y2="149.1" stroke="#0000ff" stroke-width="1"/>
<rect x="1203.0" y="135.3" width="3" height="8.6" fill="#0000ff"/>
<line x1="1210.5" y1="135.3" x2="1210.5" y2="143.9" stroke="#ff0000" stroke-width="1"/>
<rect x="1209.0" y="135.3" width="3" height="8.6" fill="#ff0000"/>
<line x1="1216.5" y1="135.3" x2="1216.5" y2="143.9" stroke="#0000ff" stroke-width="1"/>
<line x1="1215.0" y1="135.3" x2="1218.0" y2="135.3" stroke="#0000ff" stroke-width="1"/>
<line x1="1222.5" y1="126.7" x2="1222.5" y2="135.3" stroke="#0000ff" stroke-width="1"/>
<line x1="1221.0" y1="135.3" x2="1224.0" y2="135.3" stroke="#0000ff" stroke-width="1"/>
<line x1="1228.5" y1="126.7" x2="1228.5" y2="135.3" stroke="#ff0000" stroke-width="1"/>
<rect x="1227.0" y="126.7" width="3" height="8.6" fill="#ff0000"/>
<line x1="1234.5" y1="126.7" x2="1234.5" y2="135.3" stroke="#0000ff" stroke-width="1"/>
<rect x="1233.0" y="126.7" width="3" height="8.6" fill="#0000ff"/>
<line x1="1240.5" y1="135.3" x2="1240.5" y2="143.9" stroke="#0000ff" stroke-width="1"/>
<line x1="1239.0" y1="143.9" x2="1242.0" y2="143.9" stroke="#0000ff" stroke-width="1"/>
<line x1="1246.5" y1="135.3" x2="1246.5" y2="143.9" stroke="#ff0000" stroke-width="1"/>
<rect x="1245.0" y="135.3" width="3" height="8.6" fill="#ff0000"/>
<line x1="1252.5" y1="135.3" x2="1252.5" y2="143.9" stroke="#ff0000" stroke-width="1"/>
<rect x="1251.0" y="135.3" width="3" height="8.6" fill="#ff0000"/>
<line x1="1258.5" y1="135.3" x2="1258.5" y2="135.3" stroke="#0000ff" stroke-width="1"/>
<line x1="1257.0" y1="135.3" x2="1260.0" y2="135.3" stroke="#0000ff" stroke-width="1"/>
<line x1="1264.5" y1="126.7" x2="1264.5" y2="126.7" stroke="#ff0000" stroke-width="1"/>
<line x1="1263.0" y1="126.7" x2="1266.0" y2="126.7" stroke="#ff0000" stroke-width="1"/>
<line x1="1270.5" y1="126.7" x2="1270.5" y2="161.1" stroke="#ff0000" stroke-width="1"/>
<rect x="1269.0" y="126.7" width="3" height="34.4" fill="#ff0000"/>
<rect x="21.0" y="291.5" width="3" height="2.0" fill="#009000"/>
<rect x="27.0" y="292.5" width="3" height="1.0" fill="#009000"/>
<rect x="39.0" y="292.5" width="3" height="1.0" fill="#009000"/>
<rect x="45.0" y="290.5" width="3" height="3.0" fill="#009000"/>
<rect x="51.0" y="236.5" width="3" height="57.0" fill="#009000"/>
<rect x="57.0" y="257.5" width="3" height="36.0" fill="#009000"/>
<rect x="63.0" y="269.0" width="3" height="24.5" fill="#009000"/>
<rect x="69.0" y="266.5" width="3" height="27.0" fill="#009000"/>
<rect x="75.0" y="265.5" width="3" height="28.0" fill="#009000"/>
<rect x="81.0" y="285.5" width="3" height="8.0" fill="#009000"/>
<rect x="87.0" y="282.5" width="3" height="11.0" fill="#009000"/>
<rect x="93.0" y="281.0" width="3" height="12.5" fill="#009000"/>
<rect x="99.0" y="288.5" width="3" height="5.0" fill="#009000"/>
<rect x="105.0" y="285.5" width="3" height="8.0" fill="#009000"/>
<rect x="111.0" y="288.5" width="3" height="5.0" fill="#009000"/>
<rect x="117.0" y="282.5" width="3" height="11.0" fill="#009000"/>
<rect x="123.0" y="266.5" width="3" height="27.0" fill="#009000"/>
<rect x="129.0" y="289.5" width="3" height="4.0" fill="#009000"/>
<rect x="135.0" y="284.5" width="3" height="9.0" fill="#009000"/>
<rect x="141.0" y="290.5" width="3" height="3.0" fill="#009000"/>
<rect x="147.0" y="286.5" width="3" height="7.0" fill="#009000"/>
<rect x="153.0" y="288.5" width="3" height="5.0" fill="#009000"/>
<rect x="159.0" y="285.5" width="3" height="8.0" fill="#009000"/>
<rect x="165.0" y="289.5" width="3" height="4.0" fill="#009000"/>
<rect x="171.0" y="288.5" width="3" height="5.0" fill="#009000"/>
<rect x="177.0" y="286.5" width="3" height="7.0" fill="#009000"/>
<rect x="189.0" y="290.5" width="3" height="3.0" fill="#009000"/>
<rect x="195.0" y="286.5" width="3" height="7.0" fill="#009000"/>
<rect x="201.0" y="291.5" width="3" height="2.0" fill="#009000"/>
<rect x="207.0" y="285.5" width="3" height="8.0" fill="#009000"/>
<rect x="213.0" y="284.5" width="3" height="9.0" fill="#009000"/>
<rect x="219.0" y="290.5" width="3" height="3.0" fill="#009000"/>
<rect x="225.0" y="289.5" width="3" height="4.0" fill="#009000"/>
<rect x="231.0" y="290.5" width="3" height="3.0" fill="#009000"/>
<rect x="237.0" y="292.5" width="3" height="1.0" fill="#009000"/>
<rect x="243.0" y="290.5" width="3" height="3.0" fill="#009000"/>
<rect x="249.0" y="292.5" width="3" height="1.0" fill="#009000"/>
<rect x="255.0" y="289.5" width="3" height="4.0" fill="#009000"/>
<rect x="267.0" y="289.5" width="3" height="4.0" fill="#009000"/>
<rect x="279.0" y="290.5" width="3" height="3.0" fill="#009000"/>
<rect x="285.0" y="291.5" width="3" height="2.0" fill="#009000"/>
<rect x="291.0" y="289.5" width="3" height="4.0" fill="#009000"/>
<rect x="297.0" y="292.5" width="3" height="1.0" fill="#009000"/>
<rect x="303.0" y="277.5" width="3" height="16.0" fill="#009000"/>
<rect x="309.0" y="281.5" width="3" height="12.0" fill="#009000"/>
<rect x="321.0" y="285.5" width="3" height="8.0" fill="#009000"/>
<rect x="327.0" y="290.5" width="3" height="3.0" fill="#009000"/>
<rect x="339.0" y="291.5" width="3" height="2.0" fill="#009000"/>
<rect x="345.0" y="286.5" width="3" height="7.0" fill="#009000"/>
<rect x="351.0" y="285.5" width="3" height="8.0" fill="#009000"/>
<rect x="357.0" y="289.5" width="3" height="4.0" fill="#009000"/>
<rect x="363.0" y="292.5" width="3" height="1.0" fill="#009000"/>
<rect x="375.0" y="291.5" width="3" height="2.0" fill="#009000"/>
<rect x="381.0" y="288.5" width="3" height="5.0" fill="#009000"/>
<rect x="387.0" y="286.5" width="3" height="7.0" fill="#009000"/>
<rect x="393.0" y="287.5" width="3" height="6.0" fill="#009000"/>
<rect x="399.0" y="287.5" width="3" height="6.0" fill="#009000"/>
<rect x="405.0" y="288.5" width="3" height="5.0" fill="#009000"/>
<rect x="411.0" y="289.5" width="3" height="4.0" fill="#009000"/>
<rect x="417.0" y="285.5" width="3" height="8.0" fill="#009000"/>
<rect x="423.0" y="282.5" width="3" height="11.0" fill="#009000"/>
<rect x="429.0" y="289.5" width="3" height="4.0" fill="#009000"/>
<rect x="435.0" y="282.5" width="3" height="11.0" fill="#009000"/>
<rect x="441.0" y="281.5" width="3" height="12.0" fill="#009000"/>
<rect x="447.0" y="287.5" width="3" height="6.0" fill="#009000"/>
<rect x="453.0" y="292.5" width="3" height="1.0" fill="#009000"/>
<rect x="459.0" y="290.5" width="3" height="3.0" fill="#009000"/>
<rect x="465.0" y="277.5" width="3" height="16.0" fill="#009000"/>
<rect x="471.0" y="287.5" width="3" height="6.0" fill="#009000"/>
<rect x="477.0" y="273.5" width="3" height="20.0" fill="#009000"/>
<rect x="483.0" y="268.5" width="3" height="25.0" fill="#009000"/>
<rect x="489.0" y="269.5" width="3" height="24.0" fill="#009000"/>
<rect x="501.0" y="281.5" width="3" height="12.0" fill="#009000"/>
<rect x="507.0" y="281.5" width="3" height="12.0" fill="#009000"/>
<rect x="513.0" y="286.5" width="3" height="7.0" fill="#009000"/>
<rect x="519.0" y="289.5" width="3" height="4.0" fill="#009000"/>
<rect x="525.0" y="292.5" width="3" height="1.0" fill="#009000"/>
<rect x="531.0" y="286.5" width="3" height="7.0" fill="#009000"/>
<rect x="537.0" y="291.5" width="3" height="2.0" fill="#009000"/>
<rect x="543.0" y="288.5" width="3" height="5.0" fill="#009000"/>
<rect x="549.0" y="288.5" width="3" height="5.0" fill="#009000"/>
<rect x="555.0" y="281.5" width="3" height="12.0" fill="#009000"/>
<rect x="561.0" y="285.5" width="3" height="8.0" fill="#009000"/>
<rect x="567.0" y="289.5" width="3" height="4.0" fill="#009000"/>
<rect x="573.0" y="287.5" width="3" height="6.0" fill="#009000"/>
<rect x="579.0" y="287.5" width="3" height="6.0" fill="#009000"/>
<rect x="585.0" y="287.5" width="3" height="6.0" fill="#009000"/>
<rect x="591.0" y="285.5" width="3" height="8.0" fill="#009000"/>
<rect x="597.0" y="289.5" width="3" height="4.0" fill="#009000"/>
<rect x="603.0" y="289.5" width="3" height="4.0" fill="#009000"/>
<rect x="615.0" y="290.5" width="3" height="3.0" fill="#009000"/>
<rect x="621.0" y="291.5" width="3" height="2.0" fill="#009000"/>
<rect x="627.0" y="292.5" width="3" height="1.0" fill="#009000"/>
<rect x="633.0" y="292.5" width="3" height="1.0" fill="#009000"/>
<rect x="639.0" y="289.5" width="3" height="4.0" fill="#009000"/>
<rect x="645.0" y="291.5" width="3" height="2.0" fill="#009000"/>
<rect x="651.0" y="286.5" width="3" height="7.0" fill="#009000"/>
<rect x="657.0" y="288.5" width="3" height="5.0" fill="#009000"/>
<rect x="663.0" y="291.5" width="3" height="2.0" fill="#009000"/>
<rect x="669.0" y="292.5" width="3" height="1.0" fill="#009000"/>
<rect x="675.0" y="291.5" width="3" height="2.0" fill="#009000"/>
<rect x="681.0" y="292.5" width="3" height="1.0" fill="#009000"/>
<rect x="693.0" y="292.5" width="3" height="1.0" fill="#009000"/>
<rect x="699.0" y="291.5" width="3" height="2.0" fill="#009000"/>
<rect x="711.0" y="292.5" width="3" height="1.0" fill="#009000"/>
<rect x="717.0" y="292.5" width="3" height="1.0" fill="#009000"/>
<rect x="729.0" y="290.5" width="3" height="3.0" fill="#009000"/>
<rect x="747.0" y="291.5" width="3" height="2.0" fill="#009000"/>
<rect x="753.0" y="292.5" width="3" height="1.0" fill="#009000"/>
<rect x="765.0" y="291.5" width="3" height="2.0" fill="#009000"/>
<rect x="771.0" y="292.5" width="3" height="1.0" fill="#009000"/>
<rect x="783.0" y="289.5" width="3" height="4.0" fill="#009000"/>
<rect x="789.0" y="291.5" width="3" height="2.0" fill="#009000"/>
<rect x="795.0" y="290.5" width="3" height="3.0" fill="#009000"/>
<rect x="807.0" y="291.5" width="3" height="2.0" fill="#009000"/>
<rect x="813.0" y="292.5" width="3" height="1.0" fill="#009000"/>
<rect x="837.0" y="292.5" width="3" height="1.0" fill="#009000"/>
<rect x="843.0" y="292.5" width="3" height="1.0" fill="#009000"/>
<rect x="855.0" y="289.5" width="3" height="4.0" fill="#009000"/>
<rect x="861.0" y="291.5" width="3" height="2.0" fill="#009000"/>
<rect x="867.0" y="290.5" width="3" height="3.0" fill="#009000"/>
<rect x="873.0" y="291.5" width="3" height="2.0" fill="#009000"/>
<rect x="879.0" y="292.5" width="3" height="1.0" fill="#009000"/>
<rect x="891.0" y="292.5" width="3" height="1.0" fill="#009000"/>
<rect x="897.0" y="290.5" width="3" height="3.0" fill="#009000"/>
<rect x="903.0" y="291.5" width="3" height="2.0" fill="#009000"/>
<rect x="909.0" y="292.5" width="3" height="1.0" fill="#009000"/>
<rect x="915.0" y="291.5" width="3" height="2.0" fill="#009000"/>
<rect x="927.0" y="290.5" width="3" height="3.0" fill="#009000"/>
<rect x="933.0" y="291.5" width="3" height="2.0" fill="#009000"/>
<rect x="939.0" y="288.5" width="3" height="5.0" fill="#009000"/>
<rect x="945.0" y="292.5" width="3" height="1.0" fill="#009000"/>
<rect x="951.0" y="290.5" width="3" height="3.0" fill="#009000"/>
<rect x="957.0" y="290.5" width="3" height="3.0" fill="#009000"/>
<rect x="963.0" y="289.5" width="3" height="4.0" fill="#009000"/>
<rect x="969.0" y="290.5" width="3" height="3.0" fill="#009000"/>
<rect x="975.0" y="266.5" width="3" height="27.0" fill="#009000"/>
<rect x="981.0" y="283.5" width="3" height="10.0" fill="#009000"/>
<rect x="987.0" y="285.5" width="3" height="8.0" fill="#009000"/>
<rect x="993.0" y="290.5" width="3" height="3.0" fill="#009000"/>
<rect x="999.0" y="289.5" width="3" height="4.0" fill="#009000"/>
<rect x="1005.0" y="291.5" width="3" height="2.0" fill="#009000"/>
<rect x="1011.0" y="288.5" width="3" height="5.0" fill="#009000"/>
<rect x="1017.0" y="291.5" width="3" height="2.0" fill="#009000"/>
<rect x="1023.0" y="287.5" width="3" height="6.0" fill="#009000"/>
<rect x="1029.0" y="289.5" width="3" height="4.0" fill="#009000"/>
<rect x="1035.0" y="290.5" width="3" height="3.0" fill="#009000"/>
<rect x="1041.0" y="290.5" width="3" height="3.0" fill="#009000"/>
<rect x="1047.0" y="288.5" width="3" height="5.0" fill="#009000"/>
<rect x="1053.0" y="289.5" width="3" height="4.0" fill="#009000"/>
<rect x="1059.0" y="284.5" width="3" height="9.0" fill="#009000"/>
<rect x="1065.0" y="290.5" width="3" height="3.0" fill="#009000"/>
<rect x="1071.0" y="290.5" width="3" height="3.0" fill="#009000"/>
<rect x="1077.0" y="290.5" width="3" height="3.0" fill="#009000"/>
<rect x="1083.0" y="292.5" width="3" height="1.0" fill="#009000"/>
<rect x="1089.0" y="290.5" width="3" height="3.0" fill="#009000"/>
<rect x="1095.0" y="292.5" width="3" height="1.0" fill="#009000"/>
<rect x="1119.0" y="291.5" width="3" height="2.0" fill="#009000"/>
<rect x="1125.0" y="292.5" width="3" height="1.0" fill="#009000"/>
<rect x="1131.0" y="291.5" width="3" height="2.0" fill="#009000"/>
<rect x="1149.0" y="292.5" width="3" height="1.0" fill="#009000"/>
<rect x="1161.0" y="292.5" width="3" height="1.0" fill="#009000"/>
<rect x="1173.0" y="292.5" width="3" height="1.0" fill="#009000"/>
<rect x="1221.0" y="292.5" width="3" height="1.0" fill="#009000"/>
<rect x="1233.0" y="292.5" width="3" height="1.0" fill="#009000"/>
<rect x="1263.0" y="290.5" width="3" height="3.0" fill="#009000"/>
<rect x="1269.0" y="256.5" width="3" height="37.0" fill="#009000"/>
<line x1="0" y1="349.5" x2="1275" y2="349.5" stroke="#707070" stroke-width="1"/>
<line x1="4.5" y1="349.5" x2="4.5" y2="344.8" stroke="#ff0000" stroke-width="1"/>
<line x1="10.5" y1="349.5" x2="10.5" y2="344.6" stroke="#ff0000" stroke-width="1"/>
<line x1="16.5" y1="349.5" x2="16.5" y2="344.6" stroke="#ff0000" stroke-width="1"/>
<line x1="22.5" y1="349.5" x2="22.5" y2="345.1" stroke="#ff0000" stroke-width="1"/>
<line x1="28.5" y1="349.5" x2="28.5" y2="345.5" stroke="#ff0000" stroke-width="1"/>
<line x1="34.5" y1="349.5" x2="34.5" y2="346.0" stroke="#ff0000" stroke-width="1"/>
<line x1="40.5" y1="349.5" x2="40.5" y2="346.8" stroke="#ff0000" stroke-width="1"/>
<line x1="46.5" y1="349.5" x2="46.5" y2="347.8" stroke="#ff0000" stroke-width="1"/>
<line x1="52.5" y1="349.5" x2="52.5" y2="350.5" stroke="#ff0000" stroke-width="1"/>
<line x1="58.5" y1="349.5" x2="58.5" y2="355.6" stroke="#ff0000" stroke-width="1"/>
<line x1="64.5" y1="349.5" x2="64.5" y2="358.8" stroke="#ff0000" stroke-width="1"/>
<line x1="70.5" y1="349.5" x2="70.5" y2="361.3" stroke="#ff0000" stroke-width="1"/>
<line x1="76.5" y1="349.5" x2="76.5" y2="362.7" stroke="#ff0000" stroke-width="1"/>
<line x1="82.5" y1="349.5" x2="82.5" y2="363.7" stroke="#ff0000" stroke-width="1"/>
<line x1="88.5" y1="349.5" x2="88.5" y2="363.2" stroke="#ff0000" stroke-width="1"/>
<line x1="94.5" y1="349.5" x2="94.5" y2="362.6" stroke="#ff0000" stroke-width="1"/>
<line x1="100.5" y1="349.5" x2="100.5" y2="361.2" stroke="#ff0000" stroke-width="1"/>
<line x1="106.5" y1="349.5" x2="106.5" y2="359.9" stroke="#ff0000" stroke-width="1"/>
<line x1="112.5" y1="349.5" x2="112.5" y2="359.0" stroke="#ff0000" stroke-width="1"/>
<line x1="118.5" y1="349.5" x2="118.5" y2="353.9" stroke="#ff0000" stroke-width="1"/>
<line x1="124.5" y1="349.5" x2="124.5" y2="353.3" stroke="#ff0000" stroke-width="1"/>
<line x1="130.5" y1="349.5" x2="130.5" y2="352.9" stroke="#ff0000" stroke-width="1"/>
<line x1="136.5" y1="349.5" x2="136.5" y2="353.1" stroke="#ff0000" stroke-width="1"/>
<line x1="142.5" y1="349.5" x2="142.5" y2="350.8" stroke="#ff0000" stroke-width="1"/>
<line x1="148.5" y1="349.5" x2="148.5" y2="350.2" stroke="#ff0000" stroke-width="1"/>
<line x1="160.5" y1="349.5" x2="160.5" y2="350.4" stroke="#ff0000" stroke-width="1"/>
<line x1="166.5" y1="349.5" x2="166.5" y2="351.3" stroke="#ff0000" stroke-width="1"/>
<line x1="190.5" y1="349.5" x2="190.5" y2="350.5" stroke="#ff0000" stroke-width="1"/>
<line x1="196.5" y1="349.5" x2="196.5" y2="351.0" stroke="#ff0000" stroke-width="1"/>
<line x1="202.5" y1="349.5" x2="202.5" y2="352.0" stroke="#ff0000" stroke-width="1"/>
<line x1="208.5" y1="349.5" x2="208.5" y2="353.0" stroke="#ff0000" stroke-width="1"/>
<line x1="214.5" y1="349.5" x2="214.5" y2="353.1" stroke="#ff0000" stroke-width="1"/>
<line x1="220.5" y1="349.5" x2="220.5" y2="353.2" stroke="#ff0000" stroke-width="1"/>
<line x1="226.5" y1="349.5" x2="226.5" y2="351.8" stroke="#ff0000" stroke-width="1"/>
<line x1="232.5" y1="349.5" x2="232.5" y2="350.3" stroke="#ff0000" stroke-width="1"/>
<line x1="244.5" y1="349.5" x2="244.5" y2="348.4" stroke="#ff0000" stroke-width="1"/>
<line x1="250.5" y1="349.5" x2="250.5" y2="348.1" stroke="#ff0000" stroke-width="1"/>
<line x1="256.5" y1="349.5" x2="256.5" y2="348.0" stroke="#ff0000" stroke-width="1"/>
<line x1="262.5" y1="349.5" x2="262.5" y2="348.0" stroke="#ff0000" stroke-width="1"/>
<line x1="268.5" y1="349.5" x2="268.5" y2="347.8" stroke="#ff0000" stroke-width="1"/>
<line x1="274.5" y1="349.5" x2="274.5" y2="346.6" stroke="#ff0000" stroke-width="1"/>
<line x1="280.5" y1="349.5" x2="280.5" y2="345.8" stroke="#ff0000" stroke-width="1"/>
<line x1="286.5" y1="349.5" x2="286.5" y2="344.9" stroke="#ff0000" stroke-width="1"/>
<line x1="292.5" y1="349.5" x2="292.5" y2="344.5" stroke="#ff0000" stroke-width="1"/>
<line x1="298.5" y1="349.5" x2="298.5" y2="344.1" stroke="#ff0000" stroke-width="1"/>
<line x1="304.5" y1="349.5" x2="304.5" y2="342.3" stroke="#ff0000" stroke-width="1"/>
<line x1="310.5" y1="349.5" x2="310.5" y2="340.8" stroke="#ff0000" stroke-width="1"/>
<line x1="316.5" y1="349.5" x2="316.5" y2="339.8" stroke="#ff0000" stroke-width="1"/>
<line x1="322.5" y1="349.5" x2="322.5" y2="341.2" stroke="#ff0000" stroke-width="1"/>
<line x1="328.5" y1="349.5" x2="328.5" y2="342.5" stroke="#ff0000" stroke-width="1"/>
<line x1="334.5" y1="349.5" x2="334.5" y2="342.9" stroke="#ff0000" stroke-width="1"/>
<line x1="340.5" y1="349.5" x2="340.5" y2="344.6" stroke="#ff0000" stroke-width="1"/>
<line x1="346.5" y1="349.5" x2="346.5" y2="347.2" stroke="#ff0000" stroke-width="1"/>
<line x1="376.5" y1="349.5" x2="376.5" y2="350.5" stroke="#ff0000" stroke-width="1"/>
<line x1="394.5" y1="349.5" x2="394.5" y2="348.0" stroke="#ff0000" stroke-width="1"/>
<line x1="400.5" y1="349.5" x2="400.5" y2="347.3" stroke="#ff0000" stroke-width="1"/>
<line x1="406.5" y1="349.5" x2="406.5" y2="346.6" stroke="#ff0000" stroke-width="1"/>
<line x1="412.5" y1="349.5" x2="412.5" y2="346.3" stroke="#ff0000" stroke-width="1"/>
<line x1="418.5" y1="349.5" x2="418.5" y2="346.4" stroke="#ff0000" stroke-width="1"/>
<line x1="424.5" y1="349.5" x2="424.5" y2="346.9" stroke="#ff0000" stroke-width="1"/>
<line x1="430.5" y1="349.5" x2="430.5" y2="347.1" stroke="#ff0000" stroke-width="1"/>
<line x1="442.5" y1="349.5" x2="442.5" y2="351.6" stroke="#ff0000" stroke-width="1"/>
<line x1="448.5" y1="349.5" x2="448.5" y2="353.0" stroke="#ff0000" stroke-width="1"/>
<line x1="454.5" y1="349.5" x2="454.5" y2="354.5" stroke="#ff0000" stroke-width="1"/>
<line x1="460.5" y1="349.5" x2="460.5" y2="355.3" stroke="#ff0000" stroke-width="1"/>
<line x1="466.5" y1="349.5" x2="466.5" y2="356.2" stroke="#ff0000" stroke-width="1"/>
<line x1="472.5" y1="349.5" x2="472.5" y2="356.4" stroke="#ff0000" stroke-width="1"/>
<line x1="478.5" y1="349.5" x2="478.5" y2="356.4" stroke="#ff0000" stroke-width="1"/>
<line x1="484.5" y1="349.5" x2="484.5" y2="356.0" stroke="#ff0000" stroke-width="1"/>
<line x1="490.5" y1="349.5" x2="490.5" y2="354.5" stroke="#ff0000" stroke-width="1"/>
<line x1="496.5" y1="349.5" x2="496.5" y2="352.3" stroke="#ff0000" stroke-width="1"/>
<line x1="502.5" y1="349.5" x2="502.5" y2="350.6" stroke="#ff0000" stroke-width="1"/>
<line x1="508.5" y1="349.5" x2="508.5" y2="347.9" stroke="#ff0000" stroke-width="1"/>
<line x1="514.5" y1="349.5" x2="514.5" y2="346.2" stroke="#ff0000" stroke-width="1"/>
<line x1="520.5" y1="349.5" x2="520.5" y2="345.0" stroke="#ff0000" stroke-width="1"/>
<line x1="526.5" y1="349.5" x2="526.5" y2="345.3" stroke="#ff0000" stroke-width="1"/>
<line x1="532.5" y1="349.5" x2="532.5" y2="347.4" stroke="#ff0000" stroke-width="1"/>
<line x1="538.5" y1="349.5" x2="538.5" y2="347.7" stroke="#ff0000" stroke-width="1"/>
<line x1="544.5" y1="349.5" x2="544.5" y2="346.3" stroke="#ff0000" stroke-width="1"/>
<line x1="550.5" y1="349.5" x2="550.5" y2="344.5" stroke="#ff0000" stroke-width="1"/>
<line x1="556.5" y1="349.5" x2="556.5" y2="343.0" stroke="#ff0000" stroke-width="1"/>
<line x1="562.5" y1="349.5" x2="562.5" y2="342.0" stroke="#ff0000" stroke-width="1"/>
<line x1="568.5" y1="349.5" x2="568.5" y2="341.1" stroke="#ff0000" stroke-width="1"/>
<line x1="574.5" y1="349.5" x2="574.5" y2="340.5" stroke="#ff0000" stroke-width="1"/>
<line x1="580.5" y1="349.5" x2="580.5" y2="340.1" stroke="#ff0000" stroke-width="1"/>
<line x1="586.5" y1="349.5" x2="586.5" y2="339.7" stroke="#ff0000" stroke-width="1"/>
<line x1="592.5" y1="349.5" x2="592.5" y2="340.2" stroke="#ff0000" stroke-width="1"/>
<line x1="598.5" y1="349.5" x2="598.5" y2="340.7" stroke="#ff0000" stroke-width="1"/>
<line x1="604.5" y1="349.5" x2="604.5" y2="343.5" stroke="#ff0000" stroke-width="1"/>
<line x1="610.5" y1="349.5" x2="610.5" y2="345.8" stroke="#ff0000" stroke-width="1"/>
<line x1="616.5" y1="349.5" x2="616.5" y2="347.7" stroke="#ff0000" stroke-width="1"/>
<line x1="622.5" y1="349.5" x2="622.5" y2="348.7" stroke="#ff0000" stroke-width="1"/>
<line x1="634.5" y1="349.5" x2="634.5" y2="348.5" stroke="#ff0000" stroke-width="1"/>
<line x1="640.5" y1="349.5" x2="640.5" y2="348.2" stroke="#ff0000" stroke-width="1"/>
<line x1="646.5" y1="349.5" x2="646.5" y2="350.3" stroke="#ff0000" stroke-width="1"/>
<line x1="652.5" y1="349.5" x2="652.5" y2="352.0" stroke="#ff0000" stroke-width="1"/>
<line x1="658.5" y1="349.5" x2="658.5" y2="353.1" stroke="#ff0000" stroke-width="1"/>
<line x1="664.5" y1="349.5" x2="664.5" y2="354.5" stroke="#ff0000" stroke-width="1"/>
<line x1="670.5" y1="349.5" x2="670.5" y2="355.8" stroke="#ff0000" stroke-width="1"/>
<line x1="676.5" y1="349.5" x2="676.5" y2="356.8" stroke="#ff0000" stroke-width="1"/>
<line x1="682.5" y1="349.5" x2="682.5" y2="357.6" stroke="#ff0000" stroke-width="1"/>
<line x1="688.5" y1="349.5" x2="688.5" y2="357.0" stroke="#ff0000" stroke-width="1"/>
<line x1="694.5" y1="349.5" x2="694.5" y2="355.9" stroke="#ff0000" stroke-width="1"/>
<line x1="700.5" y1="349.5" x2="700.5" y2="354.9" stroke="#ff0000" stroke-width="1"/>
<line x1="706.5" y1="349.5" x2="706.5" y2="354.1" stroke="#ff0000" stroke-width="1"/>
<line x1="712.5" y1="349.5" x2="712.5" y2="353.3" stroke="#ff0000" stroke-width="1"/>
<line x1="718.5" y1="349.5" x2="718.5" y2="352.5" stroke="#ff0000" stroke-width="1"/>
<line x1="724.5" y1="349.5" x2="724.5" y2="352.1" stroke="#ff0000" stroke-width="1"/>
<line x1="730.5" y1="349.5" x2="730.5" y2="350.8" stroke="#ff0000" stroke-width="1"/>
<line x1="742.5" y1="349.5" x2="742.5" y2="348.5" stroke="#ff0000" stroke-width="1"/>
<line x1="748.5" y1="349.5" x2="748.5" y2="347.6" stroke="#ff0000" stroke-width="1"/>
<line x1="754.5" y1="349.5" x2="754.5" y2="346.7" stroke="#ff0000" stroke-width="1"/>
<line x1="760.5" y1="349.5" x2="760.5" y2="346.1" stroke="#ff0000" stroke-width="1"/>
<line x1="766.5" y1="349.5" x2="766.5" y2="345.7" stroke="#ff0000" stroke-width="1"/>
<line x1="772.5" y1="349.5" x2="772.5" y2="345.6" stroke="#ff0000" stroke-width="1"/>
<line x1="778.5" y1="349.5" x2="778.5" y2="345.4" stroke="#ff0000" stroke-width="1"/>
<line x1="784.5" y1="349.5" x2="784.5" y2="345.2" stroke="#ff0000" stroke-width="1"/>
<line x1="790.5" y1="349.5" x2="790.5" y2="345.3" stroke="#ff0000" stroke-width="1"/>
<line x1="796.5" y1="349.5" x2="796.5" y2="345.9" stroke="#ff0000" stroke-width="1"/>
<line x1="802.5" y1="349.5" x2="802.5" y2="346.6" stroke="#ff0000" stroke-width="1"/>
<line x1="808.5" y1="349.5" x2="808.5" y2="347.8" stroke="#ff0000" stroke-width="1"/>
<line x1="832.5" y1="349.5" x2="832.5" y2="348.7" stroke="#ff0000" stroke-width="1"/>
<line x1="844.5" y1="349.5" x2="844.5" y2="350.3" stroke="#ff0000" stroke-width="1"/>
<line x1="850.5" y1="349.5" x2="850.5" y2="351.5" stroke="#ff0000" stroke-width="1"/>
<line x1="856.5" y1="349.5" x2="856.5" y2="352.4" stroke="#ff0000" stroke-width="1"/>
<line x1="862.5" y1="349.5" x2="862.5" y2="352.9" stroke="#ff0000" stroke-width="1"/>
<line x1="868.5" y1="349.5" x2="868.5" y2="353.2" stroke="#ff0000" stroke-width="1"/>
<line x1="874.5" y1="349.5" x2="874.5" y2="353.2" stroke="#ff0000" stroke-width="1"/>
<line x1="880.5" y1="349.5" x2="880.5" y2="352.8" stroke="#ff0000" stroke-width="1"/>
<line x1="886.5" y1="349.5" x2="886.5" y2="352.4" stroke="#ff0000" stroke-width="1"/>
<line x1="892.5" y1="349.5" x2="892.5" y2="352.5" stroke="#ff0000" stroke-width="1"/>
<line x1="898.5" y1="349.5" x2="898.5" y2="353.2" stroke="#ff0000" stroke-width="1"/>
<line x1="904.5" y1="349.5" x2="904.5" y2="351.8" stroke="#ff0000" stroke-width="1"/>
<line x1="910.5" y1="349.5" x2="910.5" y2="350.7" stroke="#ff0000" stroke-width="1"/>
<line x1="916.5" y1="349.5" x2="916.5" y2="350.5" stroke="#ff0000" stroke-width="1"/>
<line x1="922.5" y1="349.5" x2="922.5" y2="350.2" stroke="#ff0000" stroke-width="1"/>
<line x1="946.5" y1="349.5" x2="946.5" y2="350.5" stroke="#ff0000" stroke-width="1"/>
<line x1="952.5" y1="349.5" x2="952.5" y2="350.8" stroke="#ff0000" stroke-width="1"/>
<line x1="964.5" y1="349.5" x2="964.5" y2="348.4" stroke="#ff0000" stroke-width="1"/>
<line x1="970.5" y1="349.5" x2="970.5" y2="348.3" stroke="#ff0000" stroke-width="1"/>
<line x1="976.5" y1="349.5" x2="976.5" y2="354.7" stroke="#ff0000" stroke-width="1"/>
<line x1="982.5" y1="349.5" x2="982.5" y2="357.7" stroke="#ff0000" stroke-width="1"/>
<line x1="988.5" y1="349.5" x2="988.5" y2="358.0" stroke="#ff0000" stroke-width="1"/>
<line x1="994.5" y1="349.5" x2="994.5" y2="356.8" stroke="#ff0000" stroke-width="1"/>
<line x1="1000.5" y1="349.5" x2="1000.5" y2="356.1" stroke="#ff0000" stroke-width="1"/>
<line x1="1006.5" y1="349.5" x2="1006.5" y2="355.9" stroke="#ff0000" stroke-width="1"/>
<line x1="1012.5" y1="349.5" x2="1012.5" y2="355.8" stroke="#ff0000" stroke-width="1"/>
<line x1="1018.5" y1="349.5" x2="1018.5" y2="356.0" stroke="#ff0000" stroke-width="1"/>
<line x1="1024.5" y1="349.5" x2="1024.5" y2="356.8" stroke="#ff0000" stroke-width="1"/>
<line x1="1030.5" y1="349.5" x2="1030.5" y2="354.9" stroke="#ff0000" stroke-width="1"/>
<line x1="1036.5" y1="349.5" x2="1036.5" y2="352.3" stroke="#ff0000" stroke-width="1"/>
<line x1="1042.5" y1="349.5" x2="1042.5" y2="352.0" stroke="#ff0000" stroke-width="1"/>
<line x1="1048.5" y1="349.5" x2="1048.5" y2="353.4" stroke="#ff0000" stroke-width="1"/>
<line x1="1054.5" y1="349.5" x2="1054.5" y2="354.7" stroke="#ff0000" stroke-width="1"/>
<line x1="1060.5" y1="349.5" x2="1060.5" y2="355.7" stroke="#ff0000" stroke-width="1"/>
<line x1="1066.5" y1="349.5" x2="1066.5" y2="355.6" stroke="#ff0000" stroke-width="1"/>
<line x1="1072.5" y1="349.5" x2="1072.5" y2="354.1" stroke="#ff0000" stroke-width="1"/>
<line x1="1078.5" y1="349.5" x2="1078.5" y2="352.6" stroke="#ff0000" stroke-width="1"/>
<line x1="1090.5" y1="349.5" x2="1090.5" y2="348.0" stroke="#ff0000" stroke-width="1"/>
<line x1="1096.5" y1="349.5" x2="1096.5" y2="345.9" stroke="#ff0000" stroke-width="1"/>
<line x1="1102.5" y1="349.5" x2="1102.5" y2="344.8" stroke="#ff0000" stroke-width="1"/>
<line x1="1108.5" y1="349.5" x2="1108.5" y2="344.1" stroke="#ff0000" stroke-width="1"/>
<line x1="1114.5" y1="349.5" x2="1114.5" y2="344.1" stroke="#ff0000" stroke-width="1"/>
<line x1="1120.5" y1="349.5" x2="1120.5" y2="344.4" stroke="#ff0000" stroke-width="1"/>
<line x1="1126.5" y1="349.5" x2="1126.5" y2="343.8" stroke="#ff0000" stroke-width="1"/>
<line x1="1132.5" y1="349.5" x2="1132.5" y2="342.6" stroke="#ff0000" stroke-width="1"/>
<line x1="1138.5" y1="349.5" x2="1138.5" y2="342.6" stroke="#ff0000" stroke-width="1"/>
<line x1="1144.5" y1="349.5" x2="1144.5" y2="342.6" stroke="#ff0000" stroke-width="1"/>
<line x1="1150.5" y1="349.5" x2="1150.5" y2="342.9" stroke="#ff0000" stroke-width="1"/>
<line x1="1156.5" y1="349.5" x2="1156.5" y2="343.2" stroke="#ff0000" stroke-width="1"/>
<line x1="1162.5" y1="349.5" x2="1162.5" y2="342.1" stroke="#ff0000" stroke-width="1"/>
<line x1="1168.5" y1="349.5" x2="1168.5" y2="341.2" stroke="#ff0000" stroke-width="1"/>
<line x1="1174.5" y1="349.5" x2="1174.5" y2="340.5" stroke="#ff0000" stroke-width="1"/>
<line x1="1180.5" y1="349.5" x2="1180.5" y2="340.2" stroke="#ff0000" stroke-width="1"/>
<line x1="1186.5" y1="349.5" x2="1186.5" y2="340.3" stroke="#ff0000" stroke-width="1"/>
<line x1="1192.5" y1="349.5" x2="1192.5" y2="341.8" stroke="#ff0000" stroke-width="1"/>
<line x1="1198.5" y1="349.5" x2="1198.5" y2="343.3" stroke="#ff0000" stroke-width="1"/>
<line x1="1204.5" y1="349.5" x2="1204.5" y2="344.6" stroke="#ff0000" stroke-width="1"/>
<line x1="1210.5" y1="349.5" x2="1210.5" y2="345.7" stroke="#ff0000" stroke-width="1"/>
<line x1="1216.5" y1="349.5" x2="1216.5" y2="346.4" stroke="#ff0000" stroke-width="1"/>
<line x1="1222.5" y1="349.5" x2="1222.5" y2="346.8" stroke="#ff0000" stroke-width="1"/>
<line x1="1228.5" y1="349.5" x2="1228.5" y2="347.1" stroke="#ff0000" stroke-width="1"/>
<line x1="1234.5" y1="349.5" x2="1234.5" y2="347.3" stroke="#ff0000" stroke-width="1"/>
<line x1="1270.5" y1="349.5" x2="1270.5" y2="347.6" stroke="#ff0000" stroke-width="1"/>
<polyline points="0.0,335.5 15.0,332.0 35.1,330.8 46.3,331.5 52.6,335.0 60.1,342.6 70.1,350.1 82.6,358.8 95.1,363.8 105.2,366.8 111.9,369.1 117.7,365.8 127.7,366.8 136.5,368.3 142.7,366.8 155.2,365.8 166.5,367.6 172.8,365.8 185.3,365.1 197.8,367.6 207.8,370.6 220.3,374.4 232.8,372.6 245.4,369.6 255.4,368.3 267.9,367.6 277.9,365.1 287.9,362.1 297.9,358.8 305.5,353.8 313.0,348.8 318.0,346.3 325.5,346.3 333.0,344.3 342.0,345.1 349.5,348.1 364.5,348.8 377.1,350.1 392.1,347.6 404.6,345.1 417.1,342.6 429.6,342.6 437.1,345.1 447.2,350.1 457.2,355.1 467.2,360.6 477.2,363.3 484.7,364.6 492.2,364.1 502.2,361.3 512.3,356.3 519.8,353.1 527.3,352.1 534.8,353.8 542.3,351.3 549.8,347.6 557.3,343.8 567.3,338.8 577.4,333.8 587.4,329.5 599.9,326.3 609.9,328.8 619.9,330.8 629.9,330.8 639.9,329.5 650.0,333.8 660.0,337.5 670.0,342.6 677.5,346.3 684.0,348.8 694.0,350.1 709.0,351.3 724.1,352.1 734.1,350.1 746.6,347.6 759.1,345.1 771.6,343.3 784.2,340.8 794.2,339.3 804.2,339.6 814.2,341.8 824.2,340.8 834.2,340.6 844.2,342.6 854.3,345.8 864.3,348.1 874.3,349.6 884.3,350.8 891.8,352.1 899.3,353.8 909.3,352.1 921.9,352.1 934.4,350.6 941.9,351.3 951.9,353.1 961.9,350.8 969.4,348.1 974.4,353.8 980.7,361.3 987.0,364.6 997.0,365.6 1009.5,368.8 1019.5,372.1 1026.0,374.6 1036.0,371.7 1043.4,372.7 1050.9,376.7 1060.8,380.9 1068.3,382.7 1078.3,381.7 1088.2,377.2 1098.2,371.7 1110.6,367.2 1123.1,364.7 1133.0,360.3 1145.5,357.3 1157.9,354.8 1165.4,349.8 1175.3,344.8 1185.3,341.1 1200.2,340.3 1212.7,340.6 1225.1,339.8 1235.1,339.3 1242.5,341.8 1257.5,342.3 1267.4,340.6 1274.9,338.1" fill="none" stroke="#ffff00" stroke-width="1" />
<polyline points="0.0,340.1 15.0,337.0 35.1,334.3 47.6,333.3 60.1,335.0 72.6,339.3 82.6,344.6 95.1,350.8 105.2,356.3 117.7,361.3 130.2,363.8 142.7,365.6 170.3,365.8 190.3,365.1 207.8,367.1 220.3,370.6 232.8,371.9 245.4,370.8 257.9,369.6 275.4,368.8 287.9,366.8 300.5,363.3 315.5,357.1 330.5,351.8 342.0,349.6 349.5,348.8 367.0,349.1 392.1,348.8 407.1,347.6 422.1,345.1 442.2,345.6 454.7,348.8 467.2,353.8 482.2,357.6 494.7,360.1 507.2,360.1 517.3,358.1 529.8,355.8 542.3,353.8 554.8,351.3 567.3,347.1 579.9,342.1 592.4,337.5 604.9,333.3 617.4,331.8 629.9,331.3 642.5,331.0 655.0,332.5 667.5,335.5 677.5,338.8 684.0,340.6 696.5,344.3 709.0,347.1 721.6,349.3 739.1,349.6 754.1,348.8 769.1,347.6 784.2,345.1 799.2,342.6 814.2,342.1 829.2,341.3 844.2,341.8 859.3,343.8 874.3,345.8 889.3,348.8 904.3,350.6 921.9,351.3 939.4,350.6 954.4,351.8 966.9,350.8 974.4,350.1 984.5,355.1 997.0,358.8 1009.5,362.6 1019.5,365.6 1026.0,367.1 1040.9,369.7 1053.4,372.7 1065.8,375.9 1075.8,378.4 1085.7,378.4 1098.2,375.9 1113.1,372.2 1128.0,368.5 1143.0,364.7 1157.9,361.0 1172.8,354.8 1187.8,349.8 1200.2,346.1 1215.1,343.6 1232.6,341.6 1250.0,341.6 1269.9,341.6 1274.9,340.6" fill="none" stroke="#0000ff" stroke-width="1" />
<line x1="0" y1="428.5" x2="1275" y2="428.5" stroke="#0000ff" stroke-width="1"/>
<line x1="0" y1="464.5" x2="1275" y2="464.5" stroke="#ff0000" stroke-width="1"/>
<polyline points="0.0,427.0 12.5,426.3 25.0,424.5 37.6,422.5 46.3,422.0 51.3,427.5 56.3,440.1 61.3,451.3 65.6,457.6 72.6,464.6 80.1,468.1 87.6,469.6 97.6,470.1 107.7,468.8 117.7,467.6 127.7,466.3 136.5,465.6 145.2,461.3 154.0,457.6 162.7,456.3 172.8,454.3 184.0,453.3 191.5,456.3 199.0,463.8 207.8,470.1 216.6,473.9 224.1,471.3 231.6,467.1 239.1,463.1 247.9,460.1 257.9,457.6 265.4,458.1 274.2,460.6 279.2,455.1 285.4,445.1 291.7,436.3 299.2,428.8 308.0,425.5 316.0,427.0 323.0,432.5 330.5,437.5 338.0,439.6 342.0,441.3 342.0,439.6 349.5,448.8 358.3,455.8 367.0,453.3 377.1,452.1 388.3,452.1 394.6,445.1 402.1,440.1 409.6,435.5 418.4,431.3 425.9,430.8 432.1,433.8 438.4,442.6 447.2,453.8 454.7,458.8 462.2,465.1 470.9,469.6 478.5,468.1 487.2,463.1 496.0,458.8 504.7,453.8 512.3,446.3 519.8,438.8 527.3,434.5 534.8,436.3 543.6,435.0 552.3,428.8 559.8,426.3 568.6,423.8 577.4,421.3 586.1,422.5 594.9,423.8 603.6,423.0 611.2,425.0 618.7,430.0 627.4,433.0 634.9,432.5 641.2,430.0 646.2,433.8 653.7,441.3 660.0,452.6 667.5,461.3 675.0,467.1 684.0,469.6 684.0,470.6 692.8,466.3 701.5,463.8 711.5,465.8 721.6,466.3 729.1,461.3 736.6,451.3 744.1,443.8 751.6,437.0 759.1,429.5 766.6,426.3 775.4,428.0 784.2,427.5 791.7,425.0 801.7,429.3 809.2,437.5 818.0,443.8 825.5,440.1 833.0,436.3 840.5,440.1 846.7,447.6 854.3,456.3 861.8,460.1 871.8,460.6 881.8,463.1 890.6,465.1 899.3,464.3 906.8,456.3 914.3,450.1 921.9,446.3 930.6,442.1 938.1,435.5 944.4,434.5 950.6,441.3 958.2,445.1 965.7,441.3 971.9,436.3 978.2,442.6 985.7,452.6 993.2,456.3 1000.7,452.6 1009.5,453.8 1018.3,457.6 1026.0,463.5 1026.0,463.1 1034.7,461.7 1043.4,461.7 1052.1,464.7 1059.6,468.5 1067.1,468.0 1075.8,464.0 1084.5,457.3 1093.2,449.8 1101.9,443.1 1109.4,439.1 1118.1,438.6 1126.8,435.4 1135.5,431.1 1144.2,431.6 1152.9,432.4 1157.9,431.1 1165.4,426.2 1172.8,421.2 1180.3,417.4 1187.8,419.4 1195.2,422.9 1202.7,427.9 1210.2,431.1 1217.6,432.4 1225.1,430.6 1232.6,428.6 1240.0,431.1 1246.3,438.6 1252.5,443.6 1258.7,444.8 1264.9,441.1 1271.1,433.6 1274.9,428.6" fill="none" stroke="#ff0000" stroke-width="1" />
<polyline points="0.0,426.3 10.0,426.3 16.3,421.3 21.3,423.8 27.5,425.0 33.8,422.5 40.1,419.5 45.1,422.0 48.8,432.5 52.6,445.1 57.6,455.1 63.8,463.1 68.9,463.8 75.1,467.6 82.6,472.1 87.6,469.6 93.9,470.6 100.2,466.8 106.4,469.6 111.4,470.6 118.9,465.1 125.2,465.1 130.2,466.3 136.5,465.1 142.7,459.6 147.7,456.3 154.0,455.6 160.2,456.3 166.5,456.3 172.8,451.8 177.8,453.8 184.0,455.6 189.0,455.6 195.3,463.8 200.3,468.8 207.8,473.1 214.1,475.6 220.3,469.6 226.6,463.8 231.6,465.1 237.9,460.6 244.1,458.1 250.4,457.1 256.6,455.8 261.6,458.3 267.9,461.3 274.2,463.8 277.9,452.6 280.4,441.3 286.7,438.8 291.7,428.8 297.9,422.5 303.0,428.0 309.2,427.0 316.0,427.0 323.0,441.3 331.7,438.8 338.0,440.6 342.0,445.1 345.8,453.8 352.0,455.1 358.3,456.3 364.5,451.3 370.8,449.6 376.6,457.1 382.1,452.6 388.3,446.3 394.6,437.0 400.8,439.3 407.1,433.8 413.4,430.8 418.4,429.5 424.6,433.0 429.6,434.5 436.6,449.6 442.2,453.8 448.4,461.3 454.2,460.6 459.7,467.6 466.4,472.1 472.2,467.6 478.5,465.1 484.7,461.3 491.0,457.1 497.2,455.1 503.5,449.6 509.8,442.6 516.0,436.3 522.3,433.8 527.3,433.8 532.8,439.3 539.8,434.5 546.1,428.8 552.3,426.3 558.6,424.5 563.6,423.8 568.6,420.5 573.6,422.5 579.9,419.5 586.1,423.8 592.4,423.8 598.6,420.5 603.6,423.8 609.9,430.8 616.2,431.3 622.4,432.0 628.7,434.5 633.7,431.3 639.9,424.5 642.5,431.3 646.2,442.6 651.2,450.1 657.0,455.1 663.7,465.1 670.5,470.8 676.3,468.1 682.5,472.1 684.0,471.3 689.0,467.6 694.5,460.1 700.3,462.6 706.5,469.3 712.8,466.3 719.1,465.1 724.6,465.1 730.3,451.3 736.6,443.1 742.8,439.6 748.6,438.0 754.6,427.0 760.4,422.5 766.1,428.0 771.6,430.0 778.6,423.0 784.2,426.3 790.4,426.3 796.2,428.8 802.2,430.0 808.4,446.3 814.2,446.3 820.5,440.1 826.7,435.5 833.0,436.3 838.7,446.3 844.2,451.3 850.5,464.3 856.8,462.6 862.3,454.3 868.8,465.6 874.8,463.1 880.5,462.6 886.8,469.3 893.1,463.8 898.8,462.1 904.8,447.1 910.6,446.3 916.8,446.3 923.1,446.3 928.9,438.8 934.4,428.8 940.6,432.5 946.4,443.8 952.4,450.1 958.7,442.1 964.4,436.3 970.7,432.0 976.4,450.6 982.4,458.3 988.2,455.8 994.5,453.1 1000.7,451.3 1007.0,455.1 1013.2,458.1 1019.5,461.3 1024.5,465.8 1026.0,464.7 1031.0,460.3 1036.0,457.3 1042.2,461.0 1048.4,466.0 1054.6,468.5 1060.3,469.2 1066.3,466.0 1072.0,461.7 1078.3,459.3 1084.5,452.3 1090.7,446.1 1096.9,442.3 1103.2,437.4 1109.4,438.1 1115.6,438.1 1120.1,440.3 1126.0,434.4 1132.5,429.1 1138.5,431.1 1144.5,434.1 1150.4,431.1 1156.7,429.9 1162.4,422.9 1168.4,419.9 1174.3,417.9 1179.8,416.9 1186.5,422.9 1192.3,425.4 1198.2,426.9 1204.2,434.4 1210.2,431.1 1216.4,431.6 1222.6,431.1 1228.1,424.2 1234.1,430.6 1240.5,443.6 1246.3,445.3 1252.5,446.6 1258.2,446.1 1263.7,433.6 1269.4,426.2 1274.9,421.2" fill="none" stroke="#0000ff" stroke-width="1" />
<line x1="1275.5" y1="5" x2="1275.5" y2="518" stroke="#000" stroke-width="1.15"/>
<line x1="0" y1="490.5" x2="1327" y2="490.5" stroke="#000" stroke-width="1.15"/>
<line x1="0" y1="293.5" x2="1275.5" y2="293.5" stroke="#000" stroke-width="1.2"/>
<line x1="1275.5" y1="23.5" x2="1281" y2="23.5" stroke="#000" stroke-width="1.2"/>
<text transform="scale(0.82,1)" x="1568.7 1576.0 1583.3 1590.6 1597.9" y="29" font-size="12.5" fill="#000" text-anchor="middle">9,090</text>
<line x1="1275.5" y1="66.5" x2="1281" y2="66.5" stroke="#000" stroke-width="1.2"/>
<text transform="scale(0.82,1)" x="1568.7 1576.0 1583.3 1590.6 1597.9" y="72" font-size="12.5" fill="#000" text-anchor="middle">9,065</text>
<line x1="1275.5" y1="109.5" x2="1281" y2="109.5" stroke="#000" stroke-width="1.2"/>
<text transform="scale(0.82,1)" x="1568.7 1576.0 1583.3 1590.6 1597.9" y="115" font-size="12.5" fill="#000" text-anchor="middle">9,040</text>
<line x1="1275.5" y1="152.5" x2="1281" y2="152.5" stroke="#000" stroke-width="1.2"/>
<text transform="scale(0.82,1)" x="1568.7 1576.0 1583.3 1590.6 1597.9" y="158" font-size="12.5" fill="#000" text-anchor="middle">9,015</text>
<line x1="1275.5" y1="195.5" x2="1281" y2="195.5" stroke="#000" stroke-width="1.2"/>
<text transform="scale(0.82,1)" x="1568.7 1576.0 1583.3 1590.6 1597.9" y="201" font-size="12.5" fill="#000" text-anchor="middle">8,990</text>
<line x1="1275.5" y1="235.5" x2="1281" y2="235.5" stroke="#000" stroke-width="1.2"/>
<text transform="scale(0.82,1)" x="1568.7 1576.0 1583.3 1590.6 1597.9 1605.2" y="241" font-size="12.5" fill="#000" text-anchor="middle">220.00</text>
<line x1="1275.5" y1="272.5" x2="1281" y2="272.5" stroke="#000" stroke-width="1.2"/>
<text transform="scale(0.82,1)" x="1568.7 1576.0 1583.3 1590.6 1597.9" y="278" font-size="12.5" fill="#000" text-anchor="middle">80.00</text>
<line x1="1275.5" y1="326.5" x2="1281" y2="326.5" stroke="#000" stroke-width="1.2"/>
<text transform="scale(0.82,1)" x="1568.7 1576.0 1583.3 1590.6" y="332" font-size="12.5" fill="#000" text-anchor="middle">7.50</text>
<line x1="1275.5" y1="363.5" x2="1281" y2="363.5" stroke="#000" stroke-width="1.2"/>
<text transform="scale(0.82,1)" x="1568.7 1576.0 1583.3 1590.6 1597.9" y="369" font-size="12.5" fill="#000" text-anchor="middle">-4.50</text>
<line x1="1275.5" y1="417.5" x2="1281" y2="417.5" stroke="#000" stroke-width="1.2"/>
<text transform="scale(0.82,1)" x="1568.7 1576.0 1583.3 1590.6 1597.9 1605.2" y="423" font-size="12.5" fill="#000" text-anchor="middle">100.00</text>
<line x1="1275.5" y1="455.5" x2="1281" y2="455.5" stroke="#000" stroke-width="1.2"/>
<text transform="scale(0.82,1)" x="1568.7 1576.0 1583.3 1590.6 1597.9" y="461" font-size="12.5" fill="#000" text-anchor="middle">35.00</text>
<rect x="1278.5" y="291.5" width="39" height="14" fill="#fff" stroke="#000" stroke-width="1"/>
<text x="1286" y="303.5" font-size="15" text-anchor="middle">×</text>
<text transform="scale(0.82,1)" x="1586.6 1593.9 1601.2" y="303" font-size="12.5" fill="#000" text-anchor="middle">100</text>
<path d="M1327,8.0 H1323.5 V19.0 H1327" fill="none" stroke="#999" stroke-width="1"/><rect x="1325" y="10.5" width="2" height="2" fill="#000"/>
<path d="M1327,219.5 H1323.5 V230.5 H1327" fill="none" stroke="#999" stroke-width="1"/><rect x="1325" y="222" width="2" height="2" fill="#000"/>
<path d="M1327,311.0 H1323.5 V322.0 H1327" fill="none" stroke="#999" stroke-width="1"/><rect x="1325" y="313.5" width="2" height="2" fill="#000"/>
<path d="M1327,402.0 H1323.5 V413.0 H1327" fill="none" stroke="#999" stroke-width="1"/><rect x="1325" y="404.5" width="2" height="2" fill="#000"/>
<line x1="52.5" y1="490.5" x2="52.5" y2="499" stroke="#000" stroke-width="1.2"/>
<text transform="scale(0.82,1)" x="67.1 74.4 81.7" y="510" font-size="12.5" fill="#000" text-anchor="middle">Jul</text>
<line x1="172.5" y1="490.5" x2="172.5" y2="494.5" stroke="#000" stroke-width="1.2"/>
<text transform="scale(0.82,1)" x="213.4 220.7 228.0 235.4 242.7" y="510" font-size="12.5" fill="#000" text-anchor="middle">10:40</text>
<line x1="268.5" y1="490.5" x2="268.5" y2="494.5" stroke="#000" stroke-width="1.2"/>
<text transform="scale(0.82,1)" x="330.5 337.8 345.1 352.4 359.8" y="510" font-size="12.5" fill="#000" text-anchor="middle">12:00</text>
<line x1="364.5" y1="490.5" x2="364.5" y2="494.5" stroke="#000" stroke-width="1.2"/>
<text transform="scale(0.82,1)" x="447.6 454.9 462.2 469.5 476.8" y="510" font-size="12.5" fill="#000" text-anchor="middle">13:20</text>
<line x1="460.5" y1="490.5" x2="460.5" y2="494.5" stroke="#000" stroke-width="1.2"/>
<text transform="scale(0.82,1)" x="564.6 572.0 579.3 586.6 593.9" y="510" font-size="12.5" fill="#000" text-anchor="middle">14:40</text>
<line x1="568.5" y1="490.5" x2="568.5" y2="494.5" stroke="#000" stroke-width="1.2"/>
<text transform="scale(0.82,1)" x="696.3 703.7 711.0 718.3 725.6" y="510" font-size="12.5" fill="#000" text-anchor="middle">17:20</text>
<line x1="664.5" y1="490.5" x2="664.5" y2="494.5" stroke="#000" stroke-width="1.2"/>
<text transform="scale(0.82,1)" x="813.4 820.7 828.0 835.4 842.7" y="510" font-size="12.5" fill="#000" text-anchor="middle">18:40</text>
<line x1="760.5" y1="490.5" x2="760.5" y2="494.5" stroke="#000" stroke-width="1.2"/>
<text transform="scale(0.82,1)" x="930.5 937.8 945.1 952.4 959.8" y="510" font-size="12.5" fill="#000" text-anchor="middle">20:00</text>
<line x1="856.5" y1="490.5" x2="856.5" y2="494.5" stroke="#000" stroke-width="1.2"/>
<text transform="scale(0.82,1)" x="1047.6 1054.9 1062.2 1069.5 1076.8" y="510" font-size="12.5" fill="#000" text-anchor="middle">21:20</text>
<line x1="952.5" y1="490.5" x2="952.5" y2="494.5" stroke="#000" stroke-width="1.2"/>
<text transform="scale(0.82,1)" x="1164.6 1172.0 1179.3 1186.6 1193.9" y="510" font-size="12.5" fill="#000" text-anchor="middle">22:40</text>
<line x1="1048.5" y1="490.5" x2="1048.5" y2="499" stroke="#000" stroke-width="1.2"/>
<text transform="scale(0.82,1)" x="1281.7 1289.0 1296.3 1303.7 1311.0" y="510" font-size="12.5" fill="#000" text-anchor="middle">07/03</text>
<line x1="1144.5" y1="490.5" x2="1144.5" y2="494.5" stroke="#000" stroke-width="1.2"/>
<text transform="scale(0.82,1)" x="1398.8 1406.1 1413.4 1420.7 1428.0" y="510" font-size="12.5" fill="#000" text-anchor="middle">01:20</text>
<line x1="1240.5" y1="490.5" x2="1240.5" y2="494.5" stroke="#000" stroke-width="1.2"/>
<text transform="scale(0.82,1)" x="1515.9 1523.2 1530.5 1537.8 1545.1" y="510" font-size="12.5" fill="#000" text-anchor="middle">02:40</text>
<text x="2.0" y="18.5" font-size="12" fill="#000">日経</text>
<text transform="scale(0.82,1)" x="35.4 42.7 50.0" y="18.5" font-size="12.5" fill="#000" text-anchor="middle">225</text>
<text transform="scale(0.56,1)" x="83.9" y="18.5" font-size="12.5" fill="#000" text-anchor="middle">m</text>
<text transform="scale(0.82,1)" x="64.6 72.0 79.3 93.9 101.2 108.5 115.9 123.2 130.5 145.1" y="18.5" font-size="12.5" fill="#000" text-anchor="middle">ini12/09(5</text>
<text x="122.0" y="18.5" font-size="12" fill="#000">分</text>
<text transform="scale(0.82,1)" x="167.1 181.7 189.0 196.3 203.7 211.0 218.3 225.6 232.9 240.2 247.6 262.2 276.8 284.1 291.5 298.8 306.1 313.4 320.7 328.0 335.4 342.7 357.3" y="18.5" font-size="12.5" fill="#000" text-anchor="middle">,2012/06/29-2012/07/03)</text>
<text x="316.0" y="18.5" font-size="12" fill="#000">移動平均</text>
<text transform="scale(0.82,1)" x="447.6" y="18.5" font-size="12.5" fill="#000" text-anchor="middle">(</text>
<text transform="scale(0.7,1)" x="541.4" y="18.5" font-size="12.5" fill="#000" text-anchor="middle">C</text>
<text transform="scale(0.82,1)" x="469.5 476.8 484.1 491.5 498.8 513.4 528.0" y="18.5" font-size="12.5" fill="#000" text-anchor="middle">lose,5)</text>
<text x="456.0" y="18.5" font-size="12" fill="#000">一目均衡表</text>
<text transform="scale(0.82,1)" x="632.9 647.6 654.9 669.5 676.8 684.1 698.8 706.1 720.7" y="18.5" font-size="12.5" fill="#000" text-anchor="middle">(9,26,52)</text>
<text x="614.0" y="18.5" font-size="12" fill="#000">移動平均</text>
<text transform="scale(0.82,1)" x="811.0" y="18.5" font-size="12.5" fill="#000" text-anchor="middle">(</text>
<text transform="scale(0.7,1)" x="967.1" y="18.5" font-size="12.5" fill="#000" text-anchor="middle">C</text>
<text transform="scale(0.82,1)" x="832.9 840.2 847.6 854.9 862.2 876.8 884.1 898.8" y="18.5" font-size="12.5" fill="#000" text-anchor="middle">lose,10)</text>
<text x="760.0" y="18.5" font-size="12" fill="#000">移動平均</text>
<text transform="scale(0.82,1)" x="989.0" y="18.5" font-size="12.5" fill="#000" text-anchor="middle">(</text>
<text transform="scale(0.7,1)" x="1175.7" y="18.5" font-size="12.5" fill="#000" text-anchor="middle">C</text>
<text transform="scale(0.82,1)" x="1011.0 1018.3 1025.6 1032.9 1040.2 1054.9 1062.2 1076.8" y="18.5" font-size="12.5" fill="#000" text-anchor="middle">lose,40)</text>
<text x="906.0" y="18.5" font-size="12" fill="#000">移動平均</text>
<text transform="scale(0.82,1)" x="1167.1" y="18.5" font-size="12.5" fill="#000" text-anchor="middle">(</text>
<text transform="scale(0.7,1)" x="1384.3" y="18.5" font-size="12.5" fill="#000" text-anchor="middle">C</text>
<text transform="scale(0.82,1)" x="1189.0 1196.3 1203.7 1211.0 1218.3 1232.9 1240.2 1247.6 1262.2" y="18.5" font-size="12.5" fill="#000" text-anchor="middle">lose,150)</text>
<text x="1058.0" y="18.5" font-size="12" fill="#000">移動平均</text>
<text transform="scale(0.82,1)" x="1352.4" y="18.5" font-size="12.5" fill="#000" text-anchor="middle">(</text>
<text transform="scale(0.7,1)" x="1601.4" y="18.5" font-size="12.5" fill="#000" text-anchor="middle">C</text>
<text transform="scale(0.82,1)" x="1374.4 1381.7 1389.0 1396.3 1403.7 1418.3 1425.6 1440.2" y="18.5" font-size="12.5" fill="#000" text-anchor="middle">lose,75)</text>
<text x="2.0" y="32.5" font-size="12" fill="#000">移動平均</text>
<text transform="scale(0.82,1)" x="64.6" y="32.5" font-size="12.5" fill="#000" text-anchor="middle">(</text>
<text transform="scale(0.7,1)" x="92.9" y="32.5" font-size="12.5" fill="#000" text-anchor="middle">C</text>
<text transform="scale(0.82,1)" x="86.6 93.9 101.2 108.5 115.9 130.5 137.8 152.4" y="32.5" font-size="12.5" fill="#000" text-anchor="middle">lose,20)</text>
<text x="148.0" y="32.5" font-size="12" fill="#000">移動平均</text>
<text transform="scale(0.82,1)" x="242.7" y="32.5" font-size="12.5" fill="#000" text-anchor="middle">(</text>
<text transform="scale(0.7,1)" x="301.4" y="32.5" font-size="12.5" fill="#000" text-anchor="middle">C</text>
<text transform="scale(0.82,1)" x="264.6 272.0 279.3 286.6 293.9 308.5 315.9 330.5" y="32.5" font-size="12.5" fill="#000" text-anchor="middle">lose,75)</text>
<text x="294.0" y="32.5" font-size="12" fill="#000">移動平均</text>
<text transform="scale(0.82,1)" x="420.7" y="32.5" font-size="12.5" fill="#000" text-anchor="middle">(</text>
<text transform="scale(0.7,1)" x="510.0" y="32.5" font-size="12.5" fill="#000" text-anchor="middle">C</text>
<text transform="scale(0.82,1)" x="442.7 450.0 457.3 464.6 472.0 486.6 493.9 508.5" y="32.5" font-size="12.5" fill="#000" text-anchor="middle">lose,25)</text>
<text x="2.0" y="230" font-size="12" fill="#000">出来高</text>
<text transform="scale(0.56,1)" x="8.9" y="321" font-size="12.5" fill="#000" text-anchor="middle">M</text>
<text transform="scale(0.7,1)" x="15.7 24.3 32.9" y="321" font-size="12.5" fill="#000" text-anchor="middle">ACD</text>
<text transform="scale(0.82,1)" x="35.4 50.0 57.3 64.6 79.3 86.6 93.9 108.5 123.2" y="321" font-size="12.5" fill="#000" text-anchor="middle">(12,26,9)</text>
<text x="2.0" y="412" font-size="12" fill="#000">スロー・ストキャスティクス</text>
<text transform="scale(0.82,1)" x="196.3 211.0 218.3 225.6 240.2 247.6 262.2 269.5 276.8 291.5 298.8 313.4" y="412" font-size="12.5" fill="#000" text-anchor="middle">(14,3,80,20)</text>
</svg>
</body></html>
